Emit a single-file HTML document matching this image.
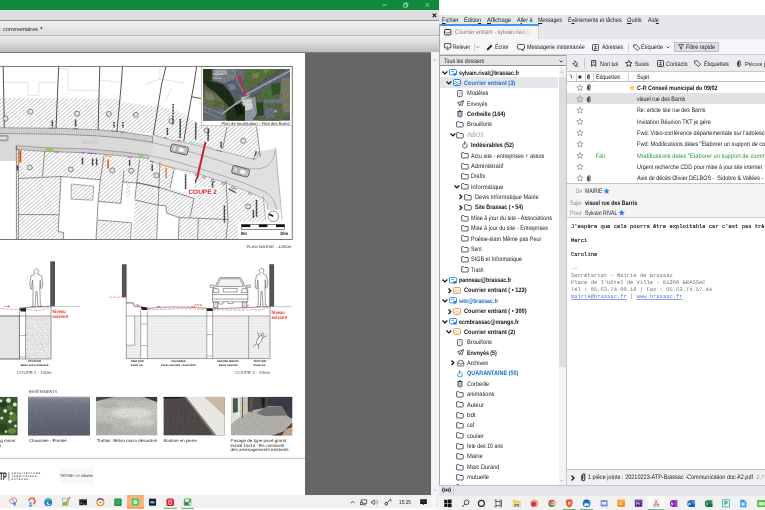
<!DOCTYPE html>
<html lang="fr"><head><meta charset="utf-8"><title>Bureau</title>
<style>
html,body{margin:0;padding:0}
body{width:765px;height:510px;overflow:hidden;position:relative;background:#fff;font-family:'Liberation Sans',sans-serif;text-rendering:geometricPrecision;-webkit-font-smoothing:antialiased}
.b{position:absolute;box-sizing:border-box}
.t{position:absolute;white-space:nowrap;display:block}
#leftwin,#rightwin{opacity:0.999}
#leftwin .t,#page{will-change:transform}
svg{position:absolute;overflow:visible}
</style></head><body>
<div class="b" id="leftwin" style="left:0;top:0;width:439.2px;height:510px;overflow:hidden"><div class="b" style="left:0px;top:0px;width:439.2px;height:10.4px;background:#10893e;"></div><svg style="left:370px;top:0" width="69" height="11" viewBox="0 0 69 11"><g stroke="#e8f5ec" stroke-width="0.6" fill="none"><path d="M12.2 5.1h4.6"/><path d="M33.6 3.9h3.3v3.3h-3.3z M34.5 3.9v-0.9h3.3v3.3h-0.9"/><path d="M55.5 2.9l3.9 3.9 M59.4 2.9l-3.9 3.9"/></g></svg><div class="b" style="left:0px;top:10.4px;width:439.2px;height:9.8px;background:#dedede;"></div><div class="b" style="left:0px;top:19.9px;width:439.2px;height:0.7px;background:#8f8f8f;"></div><svg style="left:431.6px;top:13.2px" width="5" height="5" viewBox="0 0 5 5"><path d="M0.7 0.7l3.4 3.4M4.1 0.7l-3.4 3.4" stroke="#111" stroke-width="1.1"/></svg><div class="b" style="left:0px;top:20.6px;width:439.2px;height:14.9px;background:linear-gradient(#f2f2f2,#ececec 30%,#dcdcdc);"></div><div class="b" style="left:0px;top:35.3px;width:439.2px;height:0.6px;background:#b9b9b9;"></div><span class="t" style="left:-1.5px;top:24.60px;height:10px;line-height:10px;font-size:5.6px;color:#2a62a8;">t</span><span class="t" style="left:2.6px;top:24.60px;height:10px;line-height:10px;font-size:5.6px;color:#222;">commentaires</span><svg style="left:40.3px;top:27px" width="3" height="3" viewBox="0 0 3 3"><path d="M0.2 0.6h2.4l-1.2 1.8z" fill="#222"/></svg><div class="b" style="left:0px;top:35.9px;width:439.2px;height:16.2px;background:linear-gradient(#ebebeb,#dadada 45%,#bdbdbd);"></div><div class="b" style="left:0px;top:51.5px;width:439.2px;height:1.1px;background:#7d7d7d;"></div><div class="b" style="left:0px;top:52.6px;width:431.4px;height:442.2px;background:#666666;"></div><div class="b" style="left:0px;top:52.6px;width:304.8px;height:442.2px;background:#ffffff;"></div><div class="b" style="left:431.4px;top:52.4px;width:7.8px;height:442.4px;background:#f3f3f3;"></div><svg style="left:431.4px;top:52.4px" width="8" height="443" viewBox="0 0 8 443"><g fill="none" stroke="#9a9a9a" stroke-width="0.6"><path d="M2.4 8.6l1.5-1.6 1.5 1.6"/><path d="M2.4 437.2l1.5 1.6 1.5-1.6"/></g></svg><svg id="page" style="left:0;top:0" width="305" height="495" viewBox="0 0 305 495" font-family="'Liberation Sans',sans-serif"><defs>
<pattern id="hatch" width="2.89" height="6" patternUnits="userSpaceOnUse" patternTransform="rotate(49)"><rect x="0" y="-1" width="0.7" height="8" fill="#b6b6b6"/></pattern>
<pattern id="hatchd" width="1.3" height="1.3" patternUnits="userSpaceOnUse"><rect width="1.3" height="1.3" fill="#7c7c7c"/><path d="M0 0L1.3 1.3M1.3 0L0 1.3" stroke="#262626" stroke-width="0.3"/></pattern>
<pattern id="pav" width="1.9" height="6" patternUnits="userSpaceOnUse"><rect width="1.9" height="6" fill="#dadada"/><path d="M0.3 0v6" stroke="#8e8e8e" stroke-width="0.4"/></pattern>
<pattern id="brick" width="3.4" height="2.6" patternUnits="userSpaceOnUse"><rect width="3.4" height="2.6" fill="#fdfdfd"/><path d="M0 0.2h3.4M0 1.5h3.4M0.8 0.2v1.3M2.5 1.5v1.3" stroke="#c4c4c4" stroke-width="0.32"/></pattern>
<pattern id="speck" width="5" height="5" patternUnits="userSpaceOnUse"><rect width="5" height="5" fill="#f6f6f6"/><g fill="#9c9c9c"><circle cx="0.6" cy="0.8" r="0.32"/><circle cx="2.2" cy="0.4" r="0.25"/><circle cx="3.9" cy="1.1" r="0.34"/><circle cx="1.4" cy="2.2" r="0.3"/><circle cx="3.1" cy="2.6" r="0.28"/><circle cx="4.6" cy="3.0" r="0.3"/><circle cx="0.5" cy="3.6" r="0.3"/><circle cx="2.3" cy="4.1" r="0.34"/><circle cx="3.8" cy="4.5" r="0.26"/><circle cx="1.3" cy="4.7" r="0.22"/></g></pattern>
<pattern id="diag" width="1.6" height="1.6" patternUnits="userSpaceOnUse"><rect width="1.6" height="1.6" fill="#eeeeee"/><path d="M-0.4 -0.4L2 2M-0.4 1.2L0.4 2M1.2 -0.4L2 0.4" stroke="#c6c6c6" stroke-width="0.35"/></pattern>
<clipPath id="mapclip"><rect x="-5" y="66.4" width="297.1" height="172.8"/></clipPath>
<linearGradient id="asph" x1="0" y1="0" x2="0" y2="1"><stop offset="0" stop-color="#8d90a0"/><stop offset="0.2" stop-color="#767a8a"/><stop offset="1" stop-color="#5d606c"/></linearGradient>
<linearGradient id="conc" x1="0" y1="0" x2="0" y2="1"><stop offset="0" stop-color="#a5a5a0"/><stop offset="0.12" stop-color="#c2c2bd"/><stop offset="0.45" stop-color="#cbcbc6"/><stop offset="1" stop-color="#b4b4af"/></linearGradient>
<filter id="grain" x="0" y="0" width="100%" height="100%"><feTurbulence type="fractalNoise" baseFrequency="1.1" numOctaves="2" seed="3" result="n"/><feColorMatrix in="n" type="matrix" values="0 0 0 0 0  0 0 0 0 0  0 0 0 0 0  0.9 0.9 0 0 -0.72" result="a"/><feComposite in="a" in2="SourceGraphic" operator="in"/></filter>
<filter id="blur05"><feGaussianBlur stdDeviation="0.45"/></filter>
<filter id="blur07" x="-10%" y="-10%" width="120%" height="120%"><feGaussianBlur stdDeviation="0.7"/></filter>
<filter id="blur1"><feGaussianBlur stdDeviation="0.8"/></filter>
<filter id="blur2"><feGaussianBlur stdDeviation="1.6"/></filter>
</defs><g clip-path="url(#mapclip)"><rect x="-5" y="66.4" width="297.1" height="172.8" fill="#fff"/><g fill="none" stroke="#c6c6c6" stroke-width="0.5"><path d="M4.3 82.3H28v13H38.8v-13H58"/><path d="M59.3 68.3l8.6 1.1v20.5l31.3 1"/><path d="M100.3 80.2l20.5 2.1"/><path d="M160 66.4v12M146 84l14-5 24 4M172 88l-7 14"/></g><path d="M-5 97.9L58 98.3 99 98.8 118.8 99.1 120.4 102 156.5 106.2 158 105.4 187.8 114.8 187.8 116.4 202 125.8 256.6 126.4 258.5 151.6 257.2 157.6 253.5 159.1 223.3 151.6 188.8 143.4 171.6 140.4 152.6 134.8 152.6 133.6 122.9 132 98.1 129.8 58.2 128.3 -5 127.7Z" fill="#fff"/><path d="M-5 97.9L58 98.3 99 98.8 118.8 99.1 120.4 102 156.5 106.2 158 105.4 187.8 114.8 187.8 116.4 202 125.8 256.6 126.4 258.5 151.6 257.2 157.6 253.5 159.1 223.3 151.6 188.8 143.4 171.6 140.4 152.6 134.8 152.6 133.6 122.9 132 98.1 129.8 58.2 128.3 -5 127.7Z" fill="url(#hatch)"/><path d="M-5 133.3L58.2 134.2 98.1 135.9 122.9 138 152.6 142.3 152.6 134.8 171.6 140.4 188.8 143.4 223.3 151.6 253.5 159.1 257.2 157.6 258.5 151.6 275.7 148.3 277.7 173.1 280 194.7 280.6 209.7 267.6 209.7 267 203.6 264.3 199 251.4 193 225.5 182.8 193.1 172 174.8 168.4 158.2 163.9 150 160.8 148.8 155.3 122.9 152 86.3 148.8 45.3 147.7 16.2 145.6 16.2 161-5 161Z" fill="#e0e0e0"/><path d="M-5 133.3L58.2 134.2 98.1 135.9 122.9 138 152.6 142.3 152.6 156 122.9 152 86.3 148.8 45.3 147.7 16.2 145.6 16.2 161-5 161Z" fill="#d9d9d9"/><path d="M-5 127.7L58.2 128.3 98.1 129.8 122.9 132 152.6 136.3 152.6 142.3 122.9 138 98.1 135.9 58.2 134.2 -5 133.3Z" fill="url(#pav)" stroke="#555" stroke-width="0.5"/><path d="M16.2 145.6L45.3 147.7 86.3 148.8 122.9 152 148.8 155.3 150 160.8 158.2 163.9 174.8 168.4 193.1 172 225.5 182.8 251.4 193 264.3 199 265.4 205 265.9 222 238.4 222 238.4 239.4 16.2 239.4Z" fill="#fff"/><path d="M16.2 145.6L45.3 147.7 86.3 148.8 122.9 152 148.8 155.3 150 160.8 158.2 163.9 174.8 168.4 193.1 172 225.5 182.8 251.4 193 264.3 199 265.4 205 265.9 222 238.4 222 238.4 239.4 16.2 239.4Z" fill="url(#hatch)"/><path d="M16.2 145.6L45.3 147.7 86.3 148.8 122.9 152 148.8 155.3 148.8 158.6 122.9 156 86.3 152.8 45.3 151.5 16.2 149.4Z" fill="url(#pav)" stroke="#555" stroke-width="0.45"/><rect x="45.3" y="147.9" width="8.6" height="3.2" fill="#8fcf5c"/><rect x="138" y="154.6" width="5.5" height="2" fill="#8fcf5c" transform="rotate(8 140 155)"/><path d="M61 176.5L100.3 179.7 98.1 201.3 96 239.4 63.6 239.4 63.6 232.5 58.2 231.5Z" fill="#fff"/><path d="M98.1 201.3L120.8 203.4 121.8 197 134.8 199.1 131.5 222.8 98.1 220Z" fill="#fff"/><path d="M122.9 181.9L127.2 181.9 126.2 197 121.8 197Z" fill="#fff"/><path d="M130 181.7L136.7 182.5 135 200 132.5 239.4 130 239.4Z" fill="#fff"/><path d="M157.5 205L165.8 205.8 166.7 213.3 179.2 217.5 178.3 239.4 156.7 239.4Z" fill="#fff"/><path d="M174.2 169.2L196.7 176.7 195 185 186.7 193.3 170 188.3Z" fill="#fff"/><path d="M-5 161H16.2V239.4H-5Z" fill="#fff"/><path d="M71.2 184L93.8 186.2 92.7 200.2 71.2 199.1Z" fill="url(#hatch)" stroke="#444" stroke-width="0.45"/><g fill="none" stroke="#262626" stroke-width="0.8"><path d="M3.2 66.4L4.3 127.6M58.7 66.4L56 128.3M99.8 66.4L98.1 129.8M122.5 66.4L121.2 85 116.9 132M166 66.4L161.5 85 153.3 135M196.6 66.4L193.8 85 184.7 135 183.8 141.6M191.8 96.8L200.8 98.4"/></g><g fill="none" stroke="#3a3a3a" stroke-width="0.55"><path d="M256.6 126.4L260.2 156.6M227 127l-4.5 22.5"/><path d="M16.4 146V239.4M18.4 149.5V239.4"/><path d="M18.4 178.5L61 176.5 100.3 179.7M18.4 214.5L58.5 214.7M44.6 151.7L42.5 176.9M61 176.5L58.2 231.5 63.6 232.5V239.4"/><path d="M100.3 179.7L104 156M100.3 179.7L98.1 201.3 96 239.4M98.1 201.3L120.8 203.4 124 170.5M98.1 220L131.5 222.8 130.5 239.4M134.8 199.1L139.5 160M122.9 181.9L139 183.2M139 183.2L160 188M156.7 239.4L160 162"/><path d="M136.7 182.5L157.5 186.8 194 198.5 190 217.5M179.2 217.5L228 219.5M198.5 218.3L197.5 239.4M135 200L157.5 205 165.8 205.8 166.7 213.3 179.2 217.5 178.3 239.4"/><path d="M174.2 169.2L170 188.3M228 219.5L226 180.5M226 239.4L228 219.5"/></g><g fill="none" stroke="#707070" stroke-width="0.45"><path d="M152.6 134.8L171.6 140.4 188.8 143.4 223.3 151.6 253.5 159.1"/><path d="M150 141.9L171.6 147.3 193.1 152.6 214.7 159.1 224.4 162.3C232 165 246 169.6 257.8 168.8S274 160 275.1 150.5"/><path d="M150 155.9L171.6 160.2 193.1 166.7 214.7 173.1 240.6 181.8 262.1 190.4C270 194 275 200 276.6 209.7"/><path d="M150 160.8L158.2 163.9 174.8 168.4 193.1 172 225.5 182.8 251.4 193 264.3 199 267 203.6 267.6 209.7"/><path d="M275.7 148.3L277.7 173.1 280 194.7 282 220.6M263.2 196L265.6 220.4"/></g><circle cx="30.2" cy="111.6" r="2.5" fill="#f2f2f2" stroke="#4e4e4e" stroke-width="0.7"/><circle cx="30.2" cy="111.6" r="0.95" fill="none" stroke="#a8a8a8" stroke-width="0.3"/><circle cx="77" cy="113.8" r="2.5" fill="#f2f2f2" stroke="#4e4e4e" stroke-width="0.7"/><circle cx="77" cy="113.8" r="0.95" fill="none" stroke="#a8a8a8" stroke-width="0.3"/><circle cx="108.9" cy="114" r="2.5" fill="#f2f2f2" stroke="#4e4e4e" stroke-width="0.7"/><circle cx="108.9" cy="114" r="0.95" fill="none" stroke="#a8a8a8" stroke-width="0.3"/><circle cx="135.8" cy="114.8" r="2.5" fill="#f2f2f2" stroke="#4e4e4e" stroke-width="0.7"/><circle cx="135.8" cy="114.8" r="0.95" fill="none" stroke="#a8a8a8" stroke-width="0.3"/><circle cx="29.8" cy="167.5" r="2.5" fill="#f2f2f2" stroke="#4e4e4e" stroke-width="0.7"/><circle cx="29.8" cy="167.5" r="0.95" fill="none" stroke="#a8a8a8" stroke-width="0.3"/><circle cx="70.8" cy="169.5" r="2.5" fill="#f2f2f2" stroke="#4e4e4e" stroke-width="0.7"/><circle cx="70.8" cy="169.5" r="0.95" fill="none" stroke="#a8a8a8" stroke-width="0.3"/><circle cx="112.3" cy="170.3" r="2.5" fill="#f2f2f2" stroke="#4e4e4e" stroke-width="0.7"/><circle cx="112.3" cy="170.3" r="0.95" fill="none" stroke="#a8a8a8" stroke-width="0.3"/><circle cx="131.2" cy="170.8" r="2.5" fill="#f2f2f2" stroke="#4e4e4e" stroke-width="0.7"/><circle cx="131.2" cy="170.8" r="0.95" fill="none" stroke="#a8a8a8" stroke-width="0.3"/><circle cx="5.5" cy="118.6" r="2.5" fill="#f2f2f2" stroke="#4e4e4e" stroke-width="0.7"/><circle cx="5.5" cy="118.6" r="0.95" fill="none" stroke="#a8a8a8" stroke-width="0.3"/><circle cx="171.4" cy="121.1" r="2.5" fill="#f2f2f2" stroke="#4e4e4e" stroke-width="0.7"/><circle cx="171.4" cy="121.1" r="0.95" fill="none" stroke="#a8a8a8" stroke-width="0.3"/><circle cx="243.2" cy="140.8" r="2.5" fill="#f2f2f2" stroke="#4e4e4e" stroke-width="0.7"/><circle cx="243.2" cy="140.8" r="0.95" fill="none" stroke="#a8a8a8" stroke-width="0.3"/><circle cx="248.1" cy="206.5" r="2.5" fill="#f2f2f2" stroke="#4e4e4e" stroke-width="0.7"/><circle cx="248.1" cy="206.5" r="0.95" fill="none" stroke="#a8a8a8" stroke-width="0.3"/><circle cx="156.5" cy="175.3" r="2.5" fill="#f2f2f2" stroke="#4e4e4e" stroke-width="0.7"/><circle cx="156.5" cy="175.3" r="0.95" fill="none" stroke="#a8a8a8" stroke-width="0.3"/><circle cx="206.7" cy="130.5" r="2.5" fill="#f2f2f2" stroke="#4e4e4e" stroke-width="0.7"/><circle cx="206.7" cy="130.5" r="0.95" fill="none" stroke="#a8a8a8" stroke-width="0.3"/><path d="M52.4 120.5V126.5" stroke="#111" stroke-width="1.5" stroke-dasharray="1.2 0.3" opacity="0.88"/><path d="M75.6 119.5V126.5" stroke="#111" stroke-width="1.5" stroke-dasharray="1.2 0.3" opacity="0.88"/><path d="M113.9 121.9V128.1" stroke="#111" stroke-width="1.5" stroke-dasharray="1.2 0.3" opacity="0.88"/><path d="M122.9 121.9V128.1" stroke="#111" stroke-width="1.5" stroke-dasharray="1.2 0.3" opacity="0.88"/><path d="M82.5 157.5V164.5" stroke="#111" stroke-width="1.5" stroke-dasharray="1.2 0.3" opacity="0.88"/><path d="M92.6 158.5V165.5" stroke="#111" stroke-width="1.5" stroke-dasharray="1.2 0.3" opacity="0.88"/><path d="M96.6 158.5V165.5" stroke="#111" stroke-width="1.5" stroke-dasharray="1.2 0.3" opacity="0.88"/><path d="M129.6 160.0V166.0" stroke="#111" stroke-width="1.5" stroke-dasharray="1.2 0.3" opacity="0.88"/><path d="M17.5 165.5V170.5" stroke="#111" stroke-width="1.5" stroke-dasharray="1.2 0.3" opacity="0.88"/><path d="M173 103.9V124.9" stroke="#111" stroke-width="1.5" stroke-dasharray="1.2 0.3" opacity="0.85" transform="rotate(1 173 114.4)"/><path d="M180.2 119.0V138.0" stroke="#111" stroke-width="1.5" stroke-dasharray="1.2 0.3" opacity="0.85" transform="rotate(1 180.2 128.5)"/><path d="M195.7 122.5V139.5" stroke="#111" stroke-width="1.5" stroke-dasharray="1.2 0.3" opacity="0.85" transform="rotate(1 195.7 131)"/><path d="M208.2 129.0V141.0" stroke="#111" stroke-width="1.5" stroke-dasharray="1.2 0.3" opacity="0.85" transform="rotate(1 208.2 135)"/><path d="M167.4 128.0V135.0" stroke="#111" stroke-width="1.5" stroke-dasharray="1.2 0.3" opacity="0.85" transform="rotate(0 167.4 131.5)"/><path d="M221.2 141.85V148.35" stroke="#111" stroke-width="1.5" stroke-dasharray="1.2 0.3" opacity="0.85" transform="rotate(0 221.2 145.1)"/><path d="M255.5 151.2V157.2" stroke="#111" stroke-width="1.5" stroke-dasharray="1.2 0.3" opacity="0.85" transform="rotate(15 255.5 154.2)"/><path d="M152.2 164.55V171.05" stroke="#111" stroke-width="1.5" stroke-dasharray="1.2 0.3" opacity="0.85" transform="rotate(0 152.2 167.8)"/><path d="M185.6 174.3V189.3" stroke="#111" stroke-width="1.5" stroke-dasharray="1.2 0.3" opacity="0.85" transform="rotate(0 185.6 181.8)"/><path d="M212.5 179.6V188.20000000000002" stroke="#111" stroke-width="1.5" stroke-dasharray="1.2 0.3" opacity="0.85" transform="rotate(0 212.5 183.9)"/><path d="M232.5 186.9V194.9" stroke="#111" stroke-width="1.5" stroke-dasharray="1.2 0.3" opacity="0.85" transform="rotate(-62 232.5 190.9)"/><path d="M224.4 205.6V222.6" stroke="#111" stroke-width="1.5" stroke-dasharray="1.2 0.3" opacity="0.85" transform="rotate(0 224.4 214.1)"/><path d="M256.5 200.0V217.0" stroke="#111" stroke-width="1.5" stroke-dasharray="1.2 0.3" opacity="0.85" transform="rotate(0 256.5 208.5)"/><path d="M253.4 210.0V218.0" stroke="#111" stroke-width="1.5" stroke-dasharray="1.2 0.3" opacity="0.85" transform="rotate(0 253.4 214)"/><rect x="49.5" y="127.6" width="5" height="0.9" fill="#a04fc0" transform="rotate(0 49.5 127.6)"/><rect x="73" y="127.9" width="5" height="0.9" fill="#a04fc0" transform="rotate(1 73 127.9)"/><rect x="111.5" y="130.4" width="4" height="0.9" fill="#a04fc0" transform="rotate(4 111.5 130.4)"/><rect x="120.5" y="131.4" width="4" height="0.9" fill="#a04fc0" transform="rotate(5 120.5 131.4)"/><rect x="55" y="151.6" width="4" height="0.9" fill="#a04fc0" transform="rotate(1 55 151.6)"/><rect x="81" y="152.4" width="4" height="0.9" fill="#a04fc0" transform="rotate(3 81 152.4)"/><rect x="87.5" y="152.8" width="9" height="0.9" fill="#a04fc0" transform="rotate(4 87.5 152.8)"/><rect x="128" y="157.2" width="4" height="0.9" fill="#a04fc0" transform="rotate(7 128 157.2)"/><rect x="150.2" y="160.6" width="4" height="0.9" fill="#a04fc0" transform="rotate(18 150.2 160.6)"/><rect x="163.6" y="136.9" width="3.6" height="0.9" fill="#a04fc0" transform="rotate(14 163.6 136.9)"/><rect x="177" y="139.7" width="4.4" height="0.9" fill="#a04fc0" transform="rotate(14 177 139.7)"/><rect x="216.8" y="149.8" width="5.6" height="0.9" fill="#a04fc0" transform="rotate(15 216.8 149.8)"/><rect x="252.6" y="159.1" width="6.4" height="0.9" fill="#a04fc0" transform="rotate(-52 252.6 159.1)"/><rect x="211.3" y="180.2" width="4.4" height="0.9" fill="#a04fc0" transform="rotate(18 211.3 180.2)"/><rect x="231.6" y="187" width="5.4" height="0.9" fill="#a04fc0" transform="rotate(20 231.6 187)"/><path d="M188.4 141.9L205 145.1M207.1 146.2L212.5 147.7" stroke="#9fe0ea" stroke-width="1.1"/><rect x="19" y="150" width="2.6" height="13" fill="#f59a23"/><rect x="19.7" y="151" width="1.2" height="10" fill="#e8402a"/><path d="M104.8 155.6l6.6 0.8" stroke="#f59a23" stroke-width="1"/><rect x="107.4" y="159.5" width="1.4" height="9" fill="#e8402a"/><path d="M158.2 163.9L174.8 168.4" stroke="#f59a23" stroke-width="0.9"/><rect x="165.4" y="167.8" width="1.5" height="10.6" fill="#f0683a" opacity="0.85"/><text x="83" y="144.2" font-size="5.2" fill="#c3c3c3" font-weight="bold">Barris</text><rect x="-3" y="135.4" width="11" height="5.4" rx="1" fill="#c4c4c4" stroke="#666" stroke-width="0.5"/><rect x="-2" y="136.6" width="8.6" height="3" fill="#e2e2e2" stroke="#777" stroke-width="0.35"/><g transform="translate(179.4 149.4) rotate(13)" fill="none" stroke="#505050"><rect x="-8.6" y="-4" width="17.2" height="8" rx="2.4" fill="#e6e6e6" stroke-width="0.95"/><rect x="-6.8" y="-2.9" width="13.6" height="5.8" rx="1.7" fill="#dcdcdc" stroke="#6a6a6a" stroke-width="0.5"/><rect x="-3.8" y="-2.6" width="2.6" height="5.2" fill="#b4b4b4" stroke="none"/><rect x="-0.8" y="-2.3" width="5.6" height="4.6" rx="0.9" fill="#f4f4f4" stroke="#8a8a8a" stroke-width="0.35"/></g><g transform="translate(240.6 171.3) rotate(16)" fill="none" stroke="#505050"><rect x="-8.6" y="-4" width="17.2" height="8" rx="2.4" fill="#e6e6e6" stroke-width="0.95"/><rect x="-6.8" y="-2.9" width="13.6" height="5.8" rx="1.7" fill="#dcdcdc" stroke="#6a6a6a" stroke-width="0.5"/><rect x="-3.8" y="-2.6" width="2.6" height="5.2" fill="#b4b4b4" stroke="none"/><rect x="-0.8" y="-2.3" width="5.6" height="4.6" rx="0.9" fill="#f4f4f4" stroke="#8a8a8a" stroke-width="0.35"/></g><rect x="195.0" y="173.79999999999998" width="2.8" height="1.8" fill="#ececec" stroke="#555" stroke-width="0.4" transform="rotate(18 196.4 174.7)"/><rect x="202.6" y="176.29999999999998" width="2.8" height="1.8" fill="#ececec" stroke="#555" stroke-width="0.4" transform="rotate(18 204 177.2)"/><rect x="211.1" y="179.7" width="2.8" height="1.8" fill="#ececec" stroke="#555" stroke-width="0.4" transform="rotate(18 212.5 180.6)"/><rect x="221.9" y="182.7" width="2.8" height="1.8" fill="#ececec" stroke="#555" stroke-width="0.4" transform="rotate(20 223.3 183.6)"/><rect x="231.6" y="186.7" width="2.8" height="1.8" fill="#ececec" stroke="#555" stroke-width="0.4" transform="rotate(22 233 187.6)"/><rect x="248.4" y="192.5" width="2.8" height="1.8" fill="#ececec" stroke="#555" stroke-width="0.4" transform="rotate(22 249.8 193.4)"/><path d="M253.5 159.1c2.6 0.2 4.8-2.2 5-7.5" fill="#f0f0f0" stroke="#555" stroke-width="0.5"/><path d="M205.5 142L197 178.4" stroke="#cf1f2e" stroke-width="2" stroke-linecap="butt"/><path d="M196.9 178.6l-1.7 4.8 0.5-4.6z" fill="#222" stroke="#222" stroke-width="0.4"/><rect x="187" y="187.6" width="31" height="7.6" fill="#fff"/><text x="188.4" y="193.8" font-size="6.6" font-weight="bold" fill="#d6212e" textLength="28.6" lengthAdjust="spacingAndGlyphs">COUPE 2</text><rect x="238.4" y="221.8" width="53.8" height="17.8" fill="#fff"/><rect x="241.7" y="224.5" width="42.8" height="5" fill="#fff" stroke="#111" stroke-width="0.5"/><rect x="241.70" y="224.5" width="8.56" height="2.6" fill="#111"/><rect x="258.82" y="224.5" width="8.56" height="2.6" fill="#111"/><rect x="275.94" y="224.5" width="8.56" height="2.6" fill="#111"/><text x="240.7" y="235.3" font-size="4.6" font-weight="bold" fill="#111" textLength="6.2" lengthAdjust="spacingAndGlyphs">0m</text><text x="279.9" y="235.3" font-size="4.6" font-weight="bold" fill="#111" textLength="8.2" lengthAdjust="spacingAndGlyphs">10m</text><circle cx="273.3" cy="216.3" r="5.3" fill="#fff" stroke="#333" stroke-width="0.5"/><path d="M268.9 214.2l4.4 2" stroke="#1a1a1a" stroke-width="1.7"/><rect x="201.3" y="66.4" width="91" height="59.4" fill="#fff" stroke="#888" stroke-width="0.5"/><clipPath id="aerclip"><rect x="203" y="69" width="87" height="51.8"/></clipPath><g clip-path="url(#aerclip)"><rect x="203" y="69" width="87" height="51.8" fill="#56604c"/><g filter="url(#blur07)"><polygon points="202.1,68.1 213.1,68.1 212.0,80.2 207.6,81.3 202.1,83.5" fill="#26381f" opacity="1"/><polygon points="212.0,68.1 234.0,68.1 235.1,79.1 225.2,83.5 213.1,80.2" fill="#7f858a" opacity="1"/><polygon points="214.2,70.3 226.3,69.7 227.4,74.7 215.3,75.8" fill="#a9adb0" opacity="1"/><polygon points="234.0,68.1 249.4,68.1 249.4,79.1 237.3,80.2" fill="#6d737e" opacity="1"/><polygon points="202.1,89.0 215.3,92.8 223.0,100.0 224.1,107.7 214.2,108.8 202.1,106.6" fill="#6d7452" opacity="1"/><polygon points="205.4,92.3 213.1,94.5 214.2,100.0 206.5,100.0" fill="#8a8a68" opacity="1"/><polygon points="214.2,98.9 221.9,102.2 220.8,107.7 213.1,106.6" fill="#587040" opacity="1"/><polygon points="202.1,106.6 224.1,108.8 224.6,121.9 202.1,121.9" fill="#6a707c" opacity="1"/><polygon points="225.2,82.4 237.3,79.1 249.4,81.3 249.4,95.6 237.3,100.0 230.7,93.4" fill="#5c6574" opacity="1"/><polygon points="227.4,84.6 234.0,83.5 236.2,89.0 229.6,90.6" fill="#7e8794" opacity="1"/><polygon points="203.7,82.4 208.7,80.4 223.0,84.4 229.8,92.1 234.2,100.0 235.3,105.7 228.5,106.8 222.8,100.0 215.3,92.5 207.6,87.0" fill="#1f2f1f" opacity="1"/><polygon points="226.3,109.9 237.3,104.4 247.2,105.5 249.4,121.9 226.3,121.9" fill="#27361f" opacity="1"/><polygon points="234.0,106.6 240.6,103.3 245.0,113.2 237.3,116.5" fill="#161f14" opacity="1"/><polygon points="241.1,97.2 249.9,96.1 249.9,106.6 243.3,105.7" fill="#dcdcdc" opacity="1"/><polygon points="245.0,68.1 281.3,68.1 251.6,87.9 245.0,90.6" fill="#58763f" opacity="1"/><polygon points="251.6,73.6 259.3,72.5 258.2,78.0 252.7,79.1" fill="#7f8a5c" opacity="1"/><polygon points="261.5,69.2 270.3,69.2 265.9,74.7" fill="#6f8a4d" opacity="1"/><polygon points="281.3,68.1 291.2,68.1 291.2,73.6" fill="#5d6a72" opacity="1"/><polygon points="245.0,91.7 290.6,67.5 291.2,75.2 247.2,98.3" fill="#5f6a7e" opacity="1"/><polygon points="258.2,94.5 291.2,75.8 291.2,113.2 278.0,121.9 259.3,121.9 256.0,103.3" fill="#5d6e4c" opacity="1"/><polygon points="270.8,83.5 280.2,83.5 281.8,93.4 272.5,95.6" fill="#2f5a2a" opacity="1"/><polygon points="261.5,90.1 270.8,87.9 272.5,98.9 263.7,100.0" fill="#4f7a3c" opacity="1"/><polygon points="255.4,102.2 263.1,102.2 263.7,115.4 256.5,115.4" fill="#2c4a26" opacity="1"/><polygon points="281.3,78.0 291.2,76.9 291.2,111.0 283.5,113.2 280.2,94.5" fill="#80806a" opacity="1"/><polygon points="264.8,108.8 274.1,107.7 274.7,117.5 265.3,118.6" fill="#6c7486" opacity="1"/><polygon points="245.0,98.3 255.4,96.7 257.1,113.2 251.6,121.9 245.0,121.9" fill="#9aa0aa" opacity="1"/><polygon points="245.0,100.0 251.6,98.9 252.7,108.8 245.0,111.0" fill="#e2e2e2" opacity="1"/><polygon points="263.7,100.0 281.3,98.9 281.8,102.7 263.7,103.8" fill="#737a86" opacity="1"/><polygon points="273.8,110.1 276.9,110.1 276.9,112.3 273.8,112.3" fill="#8fc4cf" opacity="1"/></g><polyline points="222.4,113.7 236.2,103.3 249.4,95.0" stroke="#b4b8be" stroke-width="1.5" fill="none" filter="url(#blur05)"/><polyline points="245.0,95.0 290.6,70.5" stroke="#a9aeb8" stroke-width="1.5" fill="none" filter="url(#blur05)"/><polyline points="234.0,69.2 237.3,81.3 245.0,94.5" stroke="#8d929c" stroke-width="1.2" fill="none" filter="url(#blur05)"/><polyline points="203.0,106.6 223.0,114.3" stroke="#9399a4" stroke-width="1" fill="none" filter="url(#blur05)"/><polyline points="203.0,111.0 220.8,118.6" stroke="#8a909a" stroke-width="1" fill="none" filter="url(#blur05)"/><rect x="203" y="69" width="87" height="51.8" fill="#141c12" filter="url(#grain)" opacity="0.4"/><text x="212.4" y="75.2" font-size="2.7" fill="#f2f2f2" opacity="0.75">Place du</text><text x="211.6" y="78.8" font-size="2.7" fill="#f2f2f2" opacity="0.75">Carreau</text><polyline points="238.9,78.0 245.0,92.8" stroke="#dc1e2c" stroke-width="1.1" fill="none"/><polygon points="237.0,78.9 239.5,75.6 241.9,78.0" fill="#dc1e2c" opacity="1"/><polygon points="243.0,92.5 246.9,91.4 245.8,95.4" fill="#dc1e2c" opacity="1"/></g><text x="221.6" y="124.6" font-size="4.3" fill="#222" textLength="68" lengthAdjust="spacingAndGlyphs">Plan de localisation – Rue des Barris</text></g><rect x="-5" y="66.3" width="297.2" height="173.1" fill="none" stroke="#3c3c3c" stroke-width="0.7"/><text x="246.4" y="248.3" font-size="3.7" fill="#2a2a2a" textLength="45" lengthAdjust="spacingAndGlyphs">PLAN MASSE - 1/250e</text><rect x="50.2" y="261.3" width="4.8" height="45" fill="url(#hatchd)"/><path d="M35.08 272.95C33.40 272.76 33.40 269.00 36.48 269.00C39.28 269.00 39.28 272.76 37.60 272.95L37.88 274.26L41.52 275.77L42.92 284.04L41.80 288.55L40.40 287.80L40.96 284.04L40.12 280.28L39.84 288.55L40.40 305.10L42.08 306.60L37.88 306.60L37.04 291.56L35.92 291.56L35.08 306.60L31.44 306.60L32.84 305.10L33.12 288.55L32.56 280.28L31.72 284.79L32.00 289.30L30.32 288.55L29.76 283.29L31.16 275.77L34.80 274.26Z" fill="#fff" stroke="#3c3c3c" stroke-width="0.5" stroke-linejoin="round"/><rect x="-2" y="316" width="21.4" height="43" fill="url(#diag)" stroke="#555" stroke-width="0.4"/><rect x="25.6" y="316" width="25.5" height="43" fill="url(#speck)"/><rect x="25.6" y="316" width="25.5" height="43" fill="#8a8a8a" filter="url(#grain)" opacity="0.22"/><g fill="none" stroke="#444" stroke-width="0.5"><path d="M-2 316H51.1M19.4 309V359M25.6 311V359M51.1 306.3V359M-2 359H51.1"/><path d="M19.4 335.6h6.2M19.4 357h6.2" stroke-width="0.4"/></g><path d="M19.4 308.6l6.6-0.6v3.4h-5z" fill="#222"/><path d="M19 308.4L25.6 307.4 50.6 306.3" stroke="#222" stroke-width="0.55" fill="none"/><path d="M51 306.3H80.2" stroke="#8a8a8a" stroke-width="0.5"/><path d="M4 306.4h5.5M7.8 305.8l2 0.6-2 0.6" stroke="#444" stroke-width="0.4" fill="none"/><path d="M-2 308.4L12 309.2 19.4 310M26 309.6L40 310.4 45 308.6 51 307.6" stroke="#f0624a" stroke-width="0.6" stroke-dasharray="3 1.1" fill="none"/><text x="52.4" y="312.9" font-size="4.7" font-weight="bold" fill="#e8402a" textLength="13.4" lengthAdjust="spacingAndGlyphs">Niveau</text><text x="52.4" y="317.9" font-size="4.7" font-weight="bold" fill="#e8402a" textLength="15.8" lengthAdjust="spacingAndGlyphs">existant</text><text x="34.6" y="362.4" font-size="2.6" font-weight="bold" fill="#111" text-anchor="middle">TROTTOIR</text><text x="34.6" y="366.3" font-size="2.6" font-weight="bold" fill="#111" text-anchor="middle">Béton micro désactivé</text><text x="16.8" y="373.8" font-size="4.3" fill="#555" textLength="35" lengthAdjust="spacingAndGlyphs">COUPE 2 - 1/50e</text><rect x="121.9" y="264.2" width="4.7" height="33.2" fill="url(#hatchd)"/><rect x="269.3" y="264.2" width="4.8" height="42.4" fill="url(#hatchd)"/><path d="M108.9 297.2H126" stroke="#f0624a" stroke-width="0.6" stroke-dasharray="3 1.1"/><rect x="126.3" y="316" width="143.7" height="42.6" fill="url(#brick)"/><rect x="126.3" y="316" width="8.4" height="29.2" fill="#fff"/><rect x="140.7" y="311" width="6.6" height="47.6" fill="#fff"/><rect x="206.8" y="311" width="5.8" height="47.6" fill="#fff"/><g fill="none" stroke="#444" stroke-width="0.5"><path d="M126.3 297.4V358.6H270V306.6"/><path d="M126.3 316H270" stroke="#666"/><path d="M134.7 316V345.2H126.3M140.7 309.6V358.6M147.3 311V358.6M206.8 310.6V358.6M212.6 309.6V358.6M248.6 316V358.6" stroke-width="0.42"/><path d="M140.7 324h6.6M140.7 345.6h6.6M206.8 334.6h5.8M206.8 356h5.8" stroke-width="0.4"/></g><path d="M126.3 303H133.2L134.6 306.2H140.6" stroke="#222" stroke-width="0.55" fill="none"/><path d="M140.6 306.4l6.8 1.2v2.4h-5.4z" fill="#222"/><path d="M206.6 308.2h6v2.8h-6z" fill="#222"/><path d="M147.4 308.4C165 306.4 185 306.6 206.6 308.2M212.6 308.6C230 308.4 250 307.4 270 306.6" stroke="#333" stroke-width="0.5" fill="none"/><path d="M270 306.7H292" stroke="#8a8a8a" stroke-width="0.5"/><path d="M126.6 302.6L133 303 134.6 306.6 141 307.4M147.6 309.8L180 308.6 206 309.4M213 309.8L240 310 262 309.8 270 306.8" stroke="#f0624a" stroke-width="0.6" stroke-dasharray="3 1.1" fill="none"/><path d="M136 304.6l3.6 0.8M157 306.6l3.4-0.2M191 306.6l4 0.2M245.4 305.6l4-0.2" stroke="#b04fc8" stroke-width="0.7"/><text x="194.4" y="306.2" font-size="3" font-weight="bold" fill="#e8402a">2.5 %</text><g fill="#fff" stroke="#3c3c3c" stroke-width="0.5" stroke-linejoin="round"><path d="M213.4 307.6v-5.8h4.4v5.8zM242.4 307.6v-5.8h4.4v5.8z" fill="#ddd"/><path d="M212.6 301.8V289.6L215 286.8 219.6 277.6H240.8L245.4 286.8 247.8 289.6V301.8Z"/><path d="M216.6 286.4L220.6 278.8H239.8L243.8 286.4Z" fill="#f4f4f4"/><path d="M210.2 285.2h3.6v2.2h-3.6zM246.6 285.2h3.6v2.2h-3.6z"/><path d="M212.6 294.6H247.8M212.6 299H247.8M223.2 288.4h14v3.6h-14zM213.4 288.6h4.6l1 4h-5.6zM242.4 288.6h4.6v4h-5.6zM218.6 301.8v2.2h4.4v-2.2M228 301.8v1.6h5v-1.6"/></g><path d="M260.31 272.41C258.68 272.22 258.68 268.40 261.67 268.40C264.39 268.40 264.39 272.22 262.76 272.41L263.03 273.75L266.57 275.28L267.93 283.68L266.84 288.26L265.48 287.50L266.02 283.68L265.21 279.86L264.94 288.26L265.48 305.07L267.11 306.60L263.03 306.60L262.22 291.32L261.13 291.32L260.31 306.60L256.78 306.60L258.14 305.07L258.41 288.26L257.86 279.86L257.05 284.44L257.32 289.03L255.69 288.26L255.14 282.92L256.50 275.28L260.04 273.75Z" fill="#fff" stroke="#3c3c3c" stroke-width="0.5" stroke-linejoin="round"/><text x="271.4" y="314" font-size="4.7" font-weight="bold" fill="#e8402a" textLength="13.4" lengthAdjust="spacingAndGlyphs">Niveau</text><text x="271.4" y="319.1" font-size="4.7" font-weight="bold" fill="#e8402a" textLength="15.8" lengthAdjust="spacingAndGlyphs">existant</text><g transform="translate(259.4 340) rotate(25)" fill="#fff" stroke="#444" stroke-width="0.5"><ellipse cx="0" cy="0" rx="2" ry="5"/><circle cx="0.4" cy="-6.4" r="1.4"/><path d="M-1.6 -3l-3.6-3.6M1.8 -3l3-4M-1 4.6l-2 4M1.2 4.6l1.6 3.6"/></g><text x="137" y="362.2" font-size="2.6" font-weight="bold" fill="#111" text-anchor="middle">TROTTOIR</text><text x="137" y="366.1" font-size="2.6" font-weight="bold" fill="#111" text-anchor="middle">Pavés cal.</text><text x="178.5" y="362.2" font-size="2.6" font-weight="bold" fill="#111" text-anchor="middle">CHAUSSEE</text><text x="178.5" y="366.1" font-size="2.6" font-weight="bold" fill="#111" text-anchor="middle">Pavés naturelle - Pavé 10/10</text><text x="228.2" y="362.2" font-size="2.6" font-weight="bold" fill="#111" text-anchor="middle">DEPOSE MINUTE</text><text x="228.2" y="366.1" font-size="2.6" font-weight="bold" fill="#111" text-anchor="middle">Pavés naturelle</text><text x="259.8" y="362.2" font-size="2.6" font-weight="bold" fill="#111" text-anchor="middle">TROTTOIR</text><text x="259.8" y="366.1" font-size="2.6" font-weight="bold" fill="#111" text-anchor="middle">Pavés cal.</text><text x="235" y="373.8" font-size="4.3" fill="#555" textLength="35" lengthAdjust="spacingAndGlyphs">COUPE 3 - 1/50e</text><text x="28.7" y="392.7" font-size="4" fill="#2a2a2a" textLength="28.4" lengthAdjust="spacingAndGlyphs">REVÊTEMENTS</text><clipPath id="ph1"><rect x="-2" y="396.8" width="19.7" height="38.8"/></clipPath><g clip-path="url(#ph1)"><rect x="-2" y="396.8" width="19.7" height="38.8" fill="#3c5a2a"/><g filter="url(#blur05)"><ellipse cx="3" cy="404" rx="4" ry="3" fill="#22401a"/><ellipse cx="13" cy="417" rx="4" ry="5" fill="#58853a"/><ellipse cx="3" cy="428" rx="5" ry="4" fill="#2a4a20"/><ellipse cx="12" cy="431" rx="4" ry="3" fill="#64904a"/><ellipse cx="10" cy="408" rx="3" ry="2.4" fill="#55803a"/><circle cx="8.6" cy="400.4" r="2.3" fill="#f4f6ee"/><circle cx="14.8" cy="404.6" r="2" fill="#eef2e6"/><circle cx="5.2" cy="410.8" r="1.9" fill="#f6f8f0"/><circle cx="11.2" cy="413.2" r="1.5" fill="#e8eede"/><circle cx="10" cy="421.6" r="1.8" fill="#eef2e4"/><circle cx="1.8" cy="418" r="1.6" fill="#e6ecdc"/><circle cx="15.4" cy="426" r="1.5" fill="#e2ead6"/><circle cx="6" cy="431.6" r="1.3" fill="#dfe8d2"/><circle cx="1" cy="401" r="1.4" fill="#e6ecdc"/></g><rect x="-2" y="396.8" width="19.7" height="38.8" fill="#16300f" filter="url(#grain)" opacity="0.3"/></g><rect x="28" y="396.8" width="62" height="38.8" fill="url(#asph)"/><rect x="28" y="396.8" width="62" height="38.8" fill="#2c2e38" filter="url(#grain)" opacity="0.22"/><rect x="28" y="396.8" width="62" height="1.4" fill="#9a9ca8" opacity="0.8"/><clipPath id="ph3"><rect x="96" y="396.8" width="61.4" height="38.8"/></clipPath><g clip-path="url(#ph3)"><rect x="96" y="396.8" width="61.4" height="38.8" fill="url(#conc)"/><g filter="url(#blur2)"><ellipse cx="132" cy="413" rx="20" ry="5" fill="#e4e3de" opacity="0.95"/><ellipse cx="142" cy="422" rx="13" ry="4" fill="#d9d8d2" opacity="0.8"/><ellipse cx="104" cy="428" rx="9" ry="6" fill="#aaa9a4" opacity="0.7"/><ellipse cx="108" cy="405" rx="10" ry="3" fill="#b0afa9" opacity="0.7"/></g><path d="M96 396.8H115L96 401.2Z" fill="#4a4f46"/><path d="M143 396.8H157.4V402.2Z" fill="#3c3e3a"/><rect x="96" y="396.8" width="61.4" height="38.8" fill="#5a5a56" filter="url(#grain)" opacity="0.2"/></g><clipPath id="ph4"><rect x="163.4" y="396.8" width="61.4" height="38.8"/></clipPath><g clip-path="url(#ph4)"><rect x="163.4" y="396.8" width="61.4" height="38.8" fill="#554d4e"/><rect x="163.4" y="396.8" width="61.4" height="38.8" fill="#1e1b1c" filter="url(#grain)" opacity="0.35"/><path d="M204.8 396.8H224.8V415.6Z" fill="#c9b9a8"/><path d="M185.9 396.8H204.8L224.8 415.6V435.6H216.5Z" fill="#e8e7e0"/><path d="M213.8 435.6L216.5 435.6L185.9 396.8H184.4Z" fill="#9a968f" opacity="0.7"/><path d="M163.4 396.8H186L178 398.40000000000003H163.4Z" fill="#1f1d1f"/></g><clipPath id="ph5"><rect x="230.8" y="396.8" width="61.5" height="38.8"/></clipPath><g clip-path="url(#ph5)"><rect x="230.8" y="396.8" width="61.5" height="38.8" fill="#b4b3ae"/><g filter="url(#blur05)"><path d="M247.6 396.7L292.8 396.7L292.8 406.1L268.3 406.1L264.5 408.0L253.2 409.9L247.6 412.2Z" fill="#4a4644"/><path d="M268.3 396.7L292.8 396.7L292.8 419.3L287.1 415.5L281.5 406.1L268.3 406.1Z" fill="#3a3e4a"/><path d="M256.1 413.2L265.5 407.1L281.5 406.1L287.6 415.5L264.5 416.0Z" fill="#77777a"/><path d="M229.7 396.7L240.5 396.7L240.5 416.7L229.7 425.1Z" fill="#e9e9e4"/><path d="M232.9 398.2L237.8 398.2L237.8 412.0L232.9 412.9Z" fill="#3f5f55"/><path d="M240.5 396.7L247.6 396.7L247.6 413.2L240.5 416.7Z" fill="#cfcfc8"/><path d="M242.0 397.6L242.9 397.6L242.9 417.4L242.0 417.9Z" fill="#55555a"/><path d="M243.6 403.3L245.1 403.3L245.1 410.8L243.6 411.3Z" fill="#d8c85a"/><path d="M261.2 397.8L265.0 397.8L264.5 407.5L261.9 407.5Z" fill="#1e1e22"/><path d="M249.7 397.6L252.9 397.6L252.5 412.2L250.2 412.2Z" fill="#5a5a5c"/><path d="M292.0 423.1L292.8 420.2L292.8 436.2L270.2 436.2L283.4 431.5Z" fill="#4a4442"/><path d="M285.2 429.6L292.8 426.8L292.8 436.2L281.5 436.2Z" fill="#c8a88e"/><path d="M229.7 425.1L240.5 416.7L247.6 413.2L256.1 413.2L264.5 416.0L287.1 415.5L290.9 419.3L292.0 423.1L283.4 431.5L270.2 435.8L229.7 436.2Z" fill="#b9b8b2" opacity="0.0"/></g><rect x="230.8" y="396.8" width="61.5" height="38.8" fill="#3c3c3a" filter="url(#grain)" opacity="0.18"/></g><text x="-2.4" y="442.2" font-size="4.3" fill="#1e1e1e" textLength="18" lengthAdjust="spacingAndGlyphs">ng minor</text><text x="-0.6" y="446.6" font-size="4.3" fill="#1e1e1e" textLength="1.6" lengthAdjust="spacingAndGlyphs">s</text><text x="28.9" y="442.2" font-size="4.3" fill="#1e1e1e" textLength="37.7" lengthAdjust="spacingAndGlyphs">Chaussée  - Enrobé</text><text x="96.8" y="442.2" font-size="4.3" fill="#1e1e1e" textLength="60.2" lengthAdjust="spacingAndGlyphs">Trottoir -Béton micro désactivé</text><text x="163.4" y="442.2" font-size="4.3" fill="#1e1e1e" textLength="33.6" lengthAdjust="spacingAndGlyphs">Bordure en pierre</text><text x="230.6" y="442.2" font-size="4.3" fill="#1e1e1e" textLength="55.5" lengthAdjust="spacingAndGlyphs">Pavage de type pavé granit</text><text x="230.6" y="446.5" font-size="4.3" fill="#1e1e1e" textLength="53.5" lengthAdjust="spacingAndGlyphs">éclaté 10x10 - En continuité</text><text x="230.6" y="450.8" font-size="4.3" fill="#1e1e1e" textLength="57.9" lengthAdjust="spacingAndGlyphs">des aménagements existants</text><path d="M-2 458.3H305" stroke="#a4a4a4" stroke-width="0.7"/><text x="-0.5" y="480.1" font-size="10.8" font-weight="bold" fill="#111" textLength="7.1" lengthAdjust="spacingAndGlyphs">TP</text><path d="M8.9 472.2v8.5" stroke="#222" stroke-width="0.55"/><text x="11.6" y="474.3" font-size="2.3" font-weight="bold" fill="#2a2a2a" letter-spacing="0.95">ARCHITECTURE</text><text x="11.6" y="477.0" font-size="2.3" font-weight="bold" fill="#2a2a2a" letter-spacing="0.95">TERRITOIRES</text><text x="11.6" y="479.7" font-size="2.3" font-weight="bold" fill="#2a2a2a" letter-spacing="0.95">PAYSAGE</text><rect x="59" y="467.6" width="34.8" height="15.9" fill="#f7f7f7"/><text x="60.1" y="476.7" font-size="4.2" fill="#3a3a3a" textLength="32.6" lengthAdjust="spacingAndGlyphs">TECHNI-<tspan fill="#d98a1e">ci</tspan><tspan fill="#5aa63a">té</tspan> urbaine</text></svg><div class="b" style="left:0px;top:494.8px;width:439.2px;height:13.6px;background:#f1f1f1;"></div><div class="b" style="left:0px;top:508.4px;width:439.2px;height:1.6px;background:#fdfdfd;"></div><svg style="left:0;top:494.8px" width="440" height="15.2" viewBox="0 494.8 440 15.2" font-family="'Liberation Sans',sans-serif"><rect x="126.9" y="494.8" width="16.9" height="13.5" fill="#fab07c"/><rect x="126.9" y="507.4" width="16.9" height="0.9" fill="#ee7f35"/><ellipse cx="13" cy="500.6" rx="3.6" ry="2.7" fill="#fdf3f3" stroke="#e8707a" stroke-width="0.9" transform="rotate(-15 13 500.6)"/><path d="M13.6 500.4l2.6 3.6-1.2 0.2 0.5 1.6-1 0.3-0.5-1.6-1 0.7z" fill="#3b8fe0"/><circle cx="12.4" cy="500" r="0.9" fill="#9aa"/><path d="M28.9 500.9a3 3 0 1 1 4.2 3" fill="none" stroke="#e4603e" stroke-width="1.5"/><circle cx="31" cy="500.8" r="1.5" fill="#f8f2ee"/><circle cx="30.3" cy="502.9" r="1.1" fill="#3b8fe0"/><path d="M28.6 506.2c0-2.6 3.6-2.6 3.6 0z" fill="#3b8fe0"/><circle cx="48.1" cy="502" r="3.9" fill="#1b7fd4"/><path d="M44.4 501a3.9 3.9 0 0 1 7.6 0.6c-1.2-1.6-3.4-2-5.2-1z" fill="#3fc27a"/><path d="M46.6 503.4a2.2 2.2 0 0 0 3.8 0.8c-1.5 0.4-2.4-0.4-2.4-1.6 0-0.6 0.4-1 1-1.2-1.4-0.2-2.6 0.8-2.4 2z" fill="#e9f4ff"/><rect x="62.2" y="498.4" width="5.8" height="7.2" fill="#e9ecef" stroke="#8a8f96" stroke-width="0.5"/><rect x="62.9" y="501.8" width="4.2" height="3" fill="#6fca3a"/><path d="M68.8 497.6l0.9 0.6-3.6 5.8-1.2 0.6 0.2-1.3z" fill="#e8a43a" stroke="#a85a1a" stroke-width="0.25"/><path d="M68.8 497.6l0.9 0.6 0.4-0.8-0.8-0.5z" fill="#d23a4a"/><rect x="79.2" y="499.2" width="7.6" height="5.8" fill="#15151a"/><rect x="79.2" y="499.2" width="7.6" height="1" fill="#5a5a60"/><path d="M80.4 502l1.6 0.9-1.6 0.9M83 504h2.4" stroke="#e8e8e8" stroke-width="0.5" fill="none"/><circle cx="100.3" cy="502" r="3.3" fill="#fff" stroke="#f39a1e" stroke-width="1.5"/><path d="M97.4 500.2a3.4 3.4 0 0 1 5.8 0" fill="none" stroke="#7a4ae0" stroke-width="1.6"/><circle cx="100.3" cy="502.2" r="0.8" fill="#555"/><rect x="114.2" y="498.3" width="7.4" height="7.4" rx="0.6" fill="#1f8e4a"/><path d="M115.6 500.4h4.6M115.6 502h4.6M115.6 503.6h4.6" stroke="#8fd0a6" stroke-width="0.5"/><rect x="131.8" y="498.4" width="7" height="7" rx="0.8" fill="#2fd05f"/><circle cx="135.3" cy="501.9" r="2.1" fill="#f2fff5"/><path d="M134.2 501.2c0.8-0.3 1.6-0.2 2.3 0.2M134.4 502.2c0.6-0.2 1.2-0.1 1.8 0.2" stroke="#2fd05f" stroke-width="0.4" fill="none"/><rect x="149" y="498.5" width="7" height="7" fill="#1b1b24"/><rect x="150.2" y="500.8" width="4.6" height="2.4" rx="0.6" fill="#2f8df0"/><rect x="151" y="501.4" width="2.2" height="1.1" fill="#bfe0ff"/><rect x="166.5" y="498.2" width="7.4" height="7.6" rx="1.6" fill="#df1524"/><rect x="168.7" y="499.8" width="3" height="4.4" rx="0.5" fill="none" stroke="#fff" stroke-width="0.7"/><path d="M169.4 501.4h1.6M169.4 502.6h1.6" stroke="#fff" stroke-width="0.4"/><rect x="163.6" y="507.7" width="13.2" height="0.8" fill="#3a9e68"/><rect x="183.8" y="498.2" width="7.4" height="7.4" rx="0.8" fill="#46b648"/><rect x="185" y="499" width="3.8" height="2.6" fill="#e6e6e6"/><rect x="184.6" y="502.4" width="4.4" height="2.4" fill="#5a6a78"/><circle cx="189.8" cy="503.6" r="1.3" fill="#d8f0d8"/><rect x="181" y="507.7" width="13" height="0.8" fill="#3a9e68"/><path d="M350.9 503l1.8-1.9 1.8 1.9" fill="none" stroke="#222" stroke-width="0.75"/><g fill="none" stroke="#222" stroke-width="0.65"><path d="M361.4 499.6h5.4v3.8h-3.4M361.4 499.6v2"/><rect x="360.6" y="502" width="2.4" height="2.6" fill="#f1f1f1"/><path d="M363.4 504.6h2.6"/></g><path d="M371.6 501.2h1.2l1.6-1.5v4.8l-1.6-1.5h-1.2z" fill="none" stroke="#222" stroke-width="0.6"/><path d="M375.6 500.6a2 2 0 0 1 0 2.8M376.8 499.6a3.4 3.4 0 0 1 0 4.8" fill="none" stroke="#555" stroke-width="0.5"/><g fill="none" stroke="#222" stroke-width="0.85"><circle cx="386.4" cy="503.6" r="1.3"/><path d="M387.3 502.6l2.4-2.4"/><path d="M389.4 499.4a1.4 1.4 0 0 1 1.8 1.8M390.6 498.4l0.6 0.8" stroke-width="0.7"/></g><text x="399.1" y="504.1" font-size="5.9" fill="#222" textLength="12.1" lengthAdjust="spacingAndGlyphs">15:25</text><path d="M420.4 499h6.6v4.8h-2.4l-0.9 1.1-0.9-1.1h-2.4z" fill="#151515"/><path d="M421.8 500.6h3.8M421.8 501.8h3.8" stroke="#777" stroke-width="0.35"/><rect x="431.6" y="494.8" width="7.6" height="13.6" fill="#f7f7f7"/><path d="M437.4 494.8v13.6" stroke="#d0d0d0" stroke-width="0.5"/></svg></div><div class="b" id="rightwin" style="left:439.2px;top:0;width:325.8px;height:510px;overflow:hidden;background:#fff"><div class="b" style="left:0px;top:15px;width:326px;height:24.2px;background:#e6e7eb;"></div><div class="b" style="left:0px;top:24px;width:0.7px;height:472px;background:#a9a9b0;"></div><span class="t" style="left:2.8px;top:15.70px;height:10px;line-height:10px;font-size:6.38px;color:#1c1c1c;transform:scaleX(0.8725);transform-origin:0 50%;text-decoration-thickness:0.3px;text-underline-offset:0.6px;text-decoration-color:#666;"><u>F</u>ichier</span><span class="t" style="left:25.3px;top:15.70px;height:10px;line-height:10px;font-size:6.38px;color:#1c1c1c;transform:scaleX(0.8821);transform-origin:0 50%;text-decoration-thickness:0.3px;text-underline-offset:0.6px;text-decoration-color:#666;">Éditio<u>n</u></span><span class="t" style="left:48.2px;top:15.70px;height:10px;line-height:10px;font-size:6.38px;color:#1c1c1c;transform:scaleX(0.9105);transform-origin:0 50%;text-decoration-thickness:0.3px;text-underline-offset:0.6px;text-decoration-color:#666;"><u>A</u>ffichage</span><span class="t" style="left:77.8px;top:15.70px;height:10px;line-height:10px;font-size:6.38px;color:#1c1c1c;transform:scaleX(0.8574);transform-origin:0 50%;text-decoration-thickness:0.3px;text-underline-offset:0.6px;text-decoration-color:#666;">A<u>l</u>ler à</span><span class="t" style="left:99.1px;top:15.70px;height:10px;line-height:10px;font-size:6.38px;color:#1c1c1c;transform:scaleX(0.8224);transform-origin:0 50%;text-decoration-thickness:0.3px;text-underline-offset:0.6px;text-decoration-color:#666;"><u>M</u>essages</span><span class="t" style="left:128.8px;top:15.70px;height:10px;line-height:10px;font-size:6.38px;color:#1c1c1c;transform:scaleX(0.8497);transform-origin:0 50%;text-decoration-thickness:0.3px;text-underline-offset:0.6px;text-decoration-color:#666;">É<u>v</u>énements et tâches</span><span class="t" style="left:188.2px;top:15.70px;height:10px;line-height:10px;font-size:6.38px;color:#1c1c1c;transform:scaleX(0.8959);transform-origin:0 50%;text-decoration-thickness:0.3px;text-underline-offset:0.6px;text-decoration-color:#666;"><u>O</u>utils</span><span class="t" style="left:208.7px;top:15.70px;height:10px;line-height:10px;font-size:6.38px;color:#1c1c1c;transform:scaleX(0.846);transform-origin:0 50%;text-decoration-thickness:0.3px;text-underline-offset:0.6px;text-decoration-color:#666;">Aid<u>e</u></span><div class="b" style="left:0.6px;top:24.2px;width:98.8px;height:15px;background:#f6f6f8;border-right:0.6px solid #cfcfd4"></div><div class="b" style="left:0.6px;top:24.0px;width:98.8px;height:1.9px;background:#4396ee;"></div><svg style="left:4.4px;top:28.6px" width="7.4" height="6.4" viewBox="0 0 7.4 6.4"><rect x="0.5" y="0.5" width="6.4" height="5.4" rx="1" fill="none" stroke="#2a2a33" stroke-width="1"/><path d="M1.6 3.3h1.2l0.5 0.9h0.9l0.5-0.9h1.2" fill="none" stroke="#2a2a33" stroke-width="0.6"/></svg><span class="t" style="left:15.8px;top:28.00px;height:10px;line-height:10px;font-size:6.38px;color:#7c7c84;transform:scaleX(0.8469);transform-origin:0 50%;-webkit-mask-image:linear-gradient(90deg,#000 85%,transparent);mask-image:linear-gradient(90deg,#000 85%,transparent);">Courrier entrant - sylvain.rival@</span><div class="b" style="left:0.6px;top:39.2px;width:325.4px;height:15.8px;background:#f6f6f8;border-bottom:0.6px solid #d0d0d5"></div><svg style="left:4.4px;top:43.4px" width="7.4" height="7.6" viewBox="0 0 7.4 7.6"><path d="M0.5 0.6h6.4v4.2h-2.1 M2.6 4.8h-2.1v-4.2" fill="none" stroke="#2a2a33" stroke-width="0.8"/><path d="M3.7 3v3.9M2.3 5.6l1.4 1.5 1.4-1.5" fill="none" stroke="#2a2a33" stroke-width="0.7"/></svg><span class="t" style="left:13.6px;top:43.10px;height:10px;line-height:10px;font-size:6.38px;color:#1c1c1c;transform:scaleX(0.7829);transform-origin:0 50%;">Relever</span><div class="b" style="left:35.0px;top:42.5px;width:0.5px;height:9px;background:#cfcfd4;"></div><svg style="left:36.800000000000004px;top:46.050000000000004px" width="3.6" height="2.3" viewBox="0 0 3.6 2.3"><path d="M0.5 0.5l1.3 1.3 1.3 -1.3" fill="none" stroke="#444" stroke-width="0.6"/></svg><svg style="left:46.6px;top:43.6px" width="7" height="7" viewBox="0 0 7 7"><path d="M0.6 6.4l0.5-1.9 3.9-3.9 1.4 1.4-3.9 3.9z" fill="#2a2a33"/></svg><span class="t" style="left:55.8px;top:43.10px;height:10px;line-height:10px;font-size:6.38px;color:#1c1c1c;transform:scaleX(0.7985);transform-origin:0 50%;">Écrire</span><svg style="left:77.6px;top:43.6px" width="8" height="7.4" viewBox="0 0 8 7.4"><path d="M1.4 0.5h5.2a0.9 0.9 0 0 1 0.9 0.9v2.8a0.9 0.9 0 0 1-0.9 0.9h-1.2l1 1.6-2.8-1.6h-2.2a0.9 0.9 0 0 1-0.9-0.9v-2.8a0.9 0.9 0 0 1 0.9-0.9z" fill="none" stroke="#2a2a33" stroke-width="0.8"/></svg><span class="t" style="left:87.4px;top:43.10px;height:10px;line-height:10px;font-size:6.38px;color:#1c1c1c;transform:scaleX(0.8523);transform-origin:0 50%;">Messagerie instantanée</span><svg style="left:153.2px;top:43.6px" width="7" height="7" viewBox="0 0 7 7"><rect x="0.5" y="0.5" width="6" height="6" rx="0.8" fill="none" stroke="#2a2a33" stroke-width="0.8"/><circle cx="3.5" cy="2.7" r="0.9" fill="#2a2a33"/><path d="M1.8 5.2c0-1.4 3.4-1.4 3.4 0z" fill="#2a2a33"/></svg><span class="t" style="left:162.8px;top:43.10px;height:10px;line-height:10px;font-size:6.38px;color:#1c1c1c;transform:scaleX(0.7901);transform-origin:0 50%;">Adresses</span><div class="b" style="left:188.8px;top:42.5px;width:0.5px;height:9px;background:#cfcfd4;"></div><svg style="left:194.0px;top:43.800000000000004px" width="7.4" height="7" viewBox="0 0 7.4 7"><path d="M0.6 0.9h2.7l3.4 3.3-2.4 2.3-3.7-3.4z" fill="none" stroke="#2a2a33" stroke-width="0.8" stroke-linejoin="round"/></svg><span class="t" style="left:202.2px;top:43.10px;height:10px;line-height:10px;font-size:6.38px;color:#1c1c1c;transform:scaleX(0.8819);transform-origin:0 50%;">Étiquette</span><svg style="left:227.29999999999998px;top:46.099999999999994px" width="3.8" height="2.4" viewBox="0 0 3.8 2.4"><path d="M0.5 0.5l1.4 1.4 1.4 -1.4" fill="none" stroke="#222" stroke-width="0.8"/></svg><div class="b" style="left:235.2px;top:41.5px;width:44.2px;height:10.6px;background:#dfdfe4;border:0.6px solid #bcbcc4;border-radius:0.8px"></div><svg style="left:238.4px;top:44.2px" width="6" height="6" viewBox="0 0 6 6"><path d="M0.5 0.6h5l-1.9 2.3v2.4l-1.2-0.6v-1.8z" fill="none" stroke="#2a2a33" stroke-width="0.7" stroke-linejoin="round"/></svg><span class="t" style="left:247.1px;top:43.10px;height:10px;line-height:10px;font-size:6.38px;color:#1c1c1c;transform:scaleX(0.8642);transform-origin:0 50%;">Filtre rapide</span><div class="b" style="left:0.6px;top:55px;width:127px;height:430px;background:#ffffff;"></div><div class="b" style="left:0.6px;top:55.3px;width:126.6px;height:10.9px;background:#e4e4e6;border-top:0.7px solid #9c9ca2;border-bottom:0.8px solid #8e8e94"></div><span class="t" style="left:4.6px;top:57.20px;height:10px;line-height:10px;font-size:6.38px;color:#1c1c1c;transform:scaleX(0.822);transform-origin:0 50%;">Tous les dossiers</span><svg style="left:119.9px;top:59.5px" width="4.2" height="2.6" viewBox="0 0 4.2 2.6"><path d="M0.5 0.5l1.6 1.6 1.6 -1.6" fill="none" stroke="#222" stroke-width="0.9"/></svg><div class="b" style="left:119.6px;top:67px;width:7.7px;height:417.6px;background:#f3f3f5;"></div><div class="b" style="left:119.6px;top:77.2px;width:7.7px;height:289.7px;background:#dedede;"></div><svg style="left:119.1px;top:67px" width="8.2" height="418" viewBox="0 0 8.2 418"><g fill="none" stroke="#909096" stroke-width="0.6"><path d="M2.4 5.8l1.5-1.6 1.5 1.6"/><path d="M2.4 413l1.5 1.6 1.5-1.6"/></g></svg><div class="b" style="left:127.2px;top:55px;width:0.8px;height:430px;background:#c2c2c7;"></div><div class="b" style="left:0.6px;top:66.6px;width:118.5px;height:418px;overflow:hidden"><svg style="left:2.2000000000000006px;top:4.500000000000005px" width="5.8" height="3.4" viewBox="0 0 5.8 3.4"><path d="M0.5 0.5l2.4 2.4 2.4 -2.4" fill="none" stroke="#111" stroke-width="1.25"/></svg><svg style="left:9.200000000000001px;top:2.5000000000000058px" width="8" height="7" viewBox="0 0 8 7"><rect x="0.5" y="0.5" width="7" height="5.4" rx="1.2" fill="#fff" stroke="#2f86ee" stroke-width="0.95"/><path d="M2 2.4h3.2" stroke="#2f86ee" stroke-width="0.8"/><rect x="4.3" y="3.9" width="3.2" height="2.6" rx="0.5" fill="#2f86ee"/></svg><span class="t" style="left:19.7px;top:2.00px;height:10px;line-height:10px;font-size:6.38px;color:#111;font-weight:bold;transform:scaleX(0.8224);transform-origin:0 50%;">sylvain.rival@brassac.fr</span><div class="b" style="left:0px;top:10.675000000000006px;width:118.5px;height:10.9px;background:#e4e6ec;"></div><svg style="left:6.5px;top:14.875000000000007px" width="5.8" height="3.4" viewBox="0 0 5.8 3.4"><path d="M0.5 0.5l2.4 2.4 2.4 -2.4" fill="none" stroke="#111" stroke-width="1.25"/></svg><svg style="left:13.0px;top:12.875000000000005px" width="8" height="7" viewBox="0 0 8 7"><rect x="0.5" y="0.5" width="7" height="6" rx="1.1" fill="#fff" stroke="#1f7be6" stroke-width="0.95"/><path d="M1.4 1.9l2.6 1.9 2.6-1.9 M0.9 4.5h1.5l0.6 0.8h2l0.6-0.8h1.5" fill="none" stroke="#1f7be6" stroke-width="0.6"/></svg><span class="t" style="left:23.8px;top:12.38px;height:10px;line-height:10px;font-size:6.38px;color:#1a6fd6;font-weight:bold;transform:scaleX(0.8813);transform-origin:0 50%;">Courrier entrant (3)</span><svg style="left:17.7px;top:23.050000000000004px" width="5.6" height="7.2" viewBox="0 0 5.6 7.2"><rect x="0.5" y="0.5" width="4.6" height="6.2" rx="0.8" fill="#fff" stroke="#3d3d55" stroke-width="0.8"/><path d="M2.8 1.8v0.7M2.8 3.3v0.7M2.8 4.8v0.6" stroke="#3d3d55" stroke-width="0.7"/></svg><span class="t" style="left:27.2px;top:22.75px;height:10px;line-height:10px;font-size:6.38px;color:#1c1c1c;transform:scaleX(0.8876);transform-origin:0 50%;">Modèles</span><svg style="left:16.9px;top:33.72500000000001px" width="7.2" height="6.8" viewBox="0 0 7.2 6.8"><path d="M6.5 0.6l-1.3 5.2-2.2-1.5-0.4 1.7-0.7-2.2-1.4-0.9z M6.5 0.6l-3.5 3.7" fill="none" stroke="#3d3d55" stroke-width="0.75" stroke-linejoin="round"/></svg><span class="t" style="left:27.2px;top:33.13px;height:10px;line-height:10px;font-size:6.38px;color:#1c1c1c;transform:scaleX(0.8342);transform-origin:0 50%;">Envoyés</span><svg style="left:17.6px;top:43.7px" width="5.8" height="7.4" viewBox="0 0 5.8 7.4"><path d="M0.4 1.5h5M2 0.6h1.8" stroke="#3d3d55" stroke-width="0.8" fill="none"/><path d="M0.9 1.6v4.5c0 0.4 0.3 0.7 0.7 0.7h2.6c0.4 0 0.7-0.3 0.7-0.7v-4.5z" fill="#3d3d55" fill-opacity="0.35" stroke="#3d3d55" stroke-width="0.8"/></svg><span class="t" style="left:27.2px;top:43.50px;height:10px;line-height:10px;font-size:6.38px;color:#111;font-weight:bold;transform:scaleX(0.8694);transform-origin:0 50%;">Corbeille (164)</span><svg style="left:16.6px;top:54.575px" width="7.8" height="6.6" viewBox="0 0 7.8 6.6"><path d="M0.6 1.1c0-0.3 0.2-0.5 0.5-0.5h1.7l0.8 0.9h3.1c0.3 0 0.5 0.2 0.5 0.5v3.5c0 0.3-0.2 0.5-0.5 0.5h-5.6c-0.3 0-0.5-0.2-0.5-0.5z" fill="#fff" stroke="#3d3d55" stroke-width="0.85"/></svg><span class="t" style="left:27.2px;top:53.88px;height:10px;line-height:10px;font-size:6.38px;color:#1c1c1c;transform:scaleX(0.8893);transform-origin:0 50%;">Brouillons</span><svg style="left:10.1px;top:66.75px" width="5.8" height="3.4" viewBox="0 0 5.8 3.4"><path d="M0.5 0.5l2.4 2.4 2.4 -2.4" fill="none" stroke="#111" stroke-width="1.25"/></svg><svg style="left:16.6px;top:64.95px" width="7.8" height="6.6" viewBox="0 0 7.8 6.6"><path d="M0.6 1.1c0-0.3 0.2-0.5 0.5-0.5h1.7l0.8 0.9h3.1c0.3 0 0.5 0.2 0.5 0.5v3.5c0 0.3-0.2 0.5-0.5 0.5h-5.6c-0.3 0-0.5-0.2-0.5-0.5z" fill="#fff" stroke="#3d3d55" stroke-width="0.85"/></svg><span class="t" style="left:27.2px;top:64.25px;height:10px;line-height:10px;font-size:6.38px;color:#9a9aa0;font-style:italic;transform:scaleX(0.8365);transform-origin:0 50%;">INBOX</span><svg style="left:21.8px;top:74.825px" width="5.8" height="7.4" viewBox="0 0 5.8 7.4"><path d="M2.6 0.6c0.3 1.2 2.6 2.2 2.6 4.1a2.3 2.3 0 0 1-4.6 0c0-0.9 0.5-1.5 1-2 0.2 0.5 0.5 0.8 0.8 0.9 0.3-1 0.4-2 0.2-3z" fill="none" stroke="#3d3d55" stroke-width="0.8" stroke-linejoin="round"/></svg><span class="t" style="left:31.1px;top:74.62px;height:10px;line-height:10px;font-size:6.38px;color:#111;font-weight:bold;transform:scaleX(0.8527);transform-origin:0 50%;">Indésirables (52)</span><svg style="left:20.8px;top:85.7px" width="7.8" height="6.6" viewBox="0 0 7.8 6.6"><path d="M0.6 1.1c0-0.3 0.2-0.5 0.5-0.5h1.7l0.8 0.9h3.1c0.3 0 0.5 0.2 0.5 0.5v3.5c0 0.3-0.2 0.5-0.5 0.5h-5.6c-0.3 0-0.5-0.2-0.5-0.5z" fill="#fff" stroke="#3d3d55" stroke-width="0.85"/></svg><span class="t" style="left:31.1px;top:85.00px;height:10px;line-height:10px;font-size:6.38px;color:#1c1c1c;transform:scaleX(0.8565);transform-origin:0 50%;">Actu site - entreprises + assos</span><svg style="left:20.8px;top:96.075px" width="7.8" height="6.6" viewBox="0 0 7.8 6.6"><path d="M0.6 1.1c0-0.3 0.2-0.5 0.5-0.5h1.7l0.8 0.9h3.1c0.3 0 0.5 0.2 0.5 0.5v3.5c0 0.3-0.2 0.5-0.5 0.5h-5.6c-0.3 0-0.5-0.2-0.5-0.5z" fill="#fff" stroke="#3d3d55" stroke-width="0.85"/></svg><span class="t" style="left:31.1px;top:95.38px;height:10px;line-height:10px;font-size:6.38px;color:#1c1c1c;transform:scaleX(0.9237);transform-origin:0 50%;">Administratif</span><svg style="left:20.8px;top:106.45px" width="7.8" height="6.6" viewBox="0 0 7.8 6.6"><path d="M0.6 1.1c0-0.3 0.2-0.5 0.5-0.5h1.7l0.8 0.9h3.1c0.3 0 0.5 0.2 0.5 0.5v3.5c0 0.3-0.2 0.5-0.5 0.5h-5.6c-0.3 0-0.5-0.2-0.5-0.5z" fill="#fff" stroke="#3d3d55" stroke-width="0.85"/></svg><span class="t" style="left:31.1px;top:105.75px;height:10px;line-height:10px;font-size:6.38px;color:#1c1c1c;transform:scaleX(0.8287);transform-origin:0 50%;">Drafts</span><svg style="left:14.1px;top:118.625px" width="5.8" height="3.4" viewBox="0 0 5.8 3.4"><path d="M0.5 0.5l2.4 2.4 2.4 -2.4" fill="none" stroke="#111" stroke-width="1.25"/></svg><svg style="left:20.8px;top:116.825px" width="7.8" height="6.6" viewBox="0 0 7.8 6.6"><path d="M0.6 1.1c0-0.3 0.2-0.5 0.5-0.5h1.7l0.8 0.9h3.1c0.3 0 0.5 0.2 0.5 0.5v3.5c0 0.3-0.2 0.5-0.5 0.5h-5.6c-0.3 0-0.5-0.2-0.5-0.5z" fill="#fff" stroke="#3d3d55" stroke-width="0.85"/></svg><span class="t" style="left:31.1px;top:116.12px;height:10px;line-height:10px;font-size:6.38px;color:#1c1c1c;transform:scaleX(0.9143);transform-origin:0 50%;">Informatique</span><svg style="left:18.85px;top:127.79999999999998px" width="3.3" height="5.6" viewBox="0 0 3.3 5.6"><path d="M0.5 0.5l2.3 2.3 -2.3 2.3" fill="none" stroke="#111" stroke-width="1.25"/></svg><svg style="left:24.7px;top:127.2px" width="7.8" height="6.6" viewBox="0 0 7.8 6.6"><path d="M0.6 1.1c0-0.3 0.2-0.5 0.5-0.5h1.7l0.8 0.9h3.1c0.3 0 0.5 0.2 0.5 0.5v3.5c0 0.3-0.2 0.5-0.5 0.5h-5.6c-0.3 0-0.5-0.2-0.5-0.5z" fill="#fff" stroke="#3d3d55" stroke-width="0.85"/></svg><span class="t" style="left:35.0px;top:126.50px;height:10px;line-height:10px;font-size:6.38px;color:#1c1c1c;transform:scaleX(0.8813);transform-origin:0 50%;">Devis Informatique Mairie</span><svg style="left:18.85px;top:138.17499999999998px" width="3.3" height="5.6" viewBox="0 0 3.3 5.6"><path d="M0.5 0.5l2.3 2.3 -2.3 2.3" fill="none" stroke="#111" stroke-width="1.25"/></svg><svg style="left:24.7px;top:137.57500000000002px" width="7.8" height="6.6" viewBox="0 0 7.8 6.6"><path d="M0.6 1.1c0-0.3 0.2-0.5 0.5-0.5h1.7l0.8 0.9h3.1c0.3 0 0.5 0.2 0.5 0.5v3.5c0 0.3-0.2 0.5-0.5 0.5h-5.6c-0.3 0-0.5-0.2-0.5-0.5z" fill="#fff" stroke="#3d3d55" stroke-width="0.85"/></svg><span class="t" style="left:35.0px;top:136.88px;height:10px;line-height:10px;font-size:6.38px;color:#111;font-weight:bold;transform:scaleX(0.8413);transform-origin:0 50%;">Site Brassac ( • 54)</span><svg style="left:20.8px;top:147.95000000000002px" width="7.8" height="6.6" viewBox="0 0 7.8 6.6"><path d="M0.6 1.1c0-0.3 0.2-0.5 0.5-0.5h1.7l0.8 0.9h3.1c0.3 0 0.5 0.2 0.5 0.5v3.5c0 0.3-0.2 0.5-0.5 0.5h-5.6c-0.3 0-0.5-0.2-0.5-0.5z" fill="#fff" stroke="#3d3d55" stroke-width="0.85"/></svg><span class="t" style="left:31.1px;top:147.25px;height:10px;line-height:10px;font-size:6.38px;color:#1c1c1c;transform:scaleX(0.8735);transform-origin:0 50%;">Mise à jour du site - Associations</span><svg style="left:20.8px;top:158.32500000000002px" width="7.8" height="6.6" viewBox="0 0 7.8 6.6"><path d="M0.6 1.1c0-0.3 0.2-0.5 0.5-0.5h1.7l0.8 0.9h3.1c0.3 0 0.5 0.2 0.5 0.5v3.5c0 0.3-0.2 0.5-0.5 0.5h-5.6c-0.3 0-0.5-0.2-0.5-0.5z" fill="#fff" stroke="#3d3d55" stroke-width="0.85"/></svg><span class="t" style="left:31.1px;top:157.62px;height:10px;line-height:10px;font-size:6.38px;color:#1c1c1c;transform:scaleX(0.8579);transform-origin:0 50%;">Mise à jour du site - Entreprises</span><svg style="left:20.8px;top:168.70000000000002px" width="7.8" height="6.6" viewBox="0 0 7.8 6.6"><path d="M0.6 1.1c0-0.3 0.2-0.5 0.5-0.5h1.7l0.8 0.9h3.1c0.3 0 0.5 0.2 0.5 0.5v3.5c0 0.3-0.2 0.5-0.5 0.5h-5.6c-0.3 0-0.5-0.2-0.5-0.5z" fill="#fff" stroke="#3d3d55" stroke-width="0.85"/></svg><span class="t" style="left:31.1px;top:168.00px;height:10px;line-height:10px;font-size:6.38px;color:#1c1c1c;transform:scaleX(0.86);transform-origin:0 50%;">Poésie-slam Même pas Peur</span><svg style="left:20.8px;top:179.07500000000002px" width="7.8" height="6.6" viewBox="0 0 7.8 6.6"><path d="M0.6 1.1c0-0.3 0.2-0.5 0.5-0.5h1.7l0.8 0.9h3.1c0.3 0 0.5 0.2 0.5 0.5v3.5c0 0.3-0.2 0.5-0.5 0.5h-5.6c-0.3 0-0.5-0.2-0.5-0.5z" fill="#fff" stroke="#3d3d55" stroke-width="0.85"/></svg><span class="t" style="left:31.1px;top:178.38px;height:10px;line-height:10px;font-size:6.38px;color:#1c1c1c;transform:scaleX(0.8076);transform-origin:0 50%;">Sent</span><svg style="left:20.8px;top:189.45000000000002px" width="7.8" height="6.6" viewBox="0 0 7.8 6.6"><path d="M0.6 1.1c0-0.3 0.2-0.5 0.5-0.5h1.7l0.8 0.9h3.1c0.3 0 0.5 0.2 0.5 0.5v3.5c0 0.3-0.2 0.5-0.5 0.5h-5.6c-0.3 0-0.5-0.2-0.5-0.5z" fill="#fff" stroke="#3d3d55" stroke-width="0.85"/></svg><span class="t" style="left:31.1px;top:188.75px;height:10px;line-height:10px;font-size:6.38px;color:#1c1c1c;transform:scaleX(0.8567);transform-origin:0 50%;">SIGB et Informatique</span><svg style="left:20.8px;top:199.82500000000002px" width="7.8" height="6.6" viewBox="0 0 7.8 6.6"><path d="M0.6 1.1c0-0.3 0.2-0.5 0.5-0.5h1.7l0.8 0.9h3.1c0.3 0 0.5 0.2 0.5 0.5v3.5c0 0.3-0.2 0.5-0.5 0.5h-5.6c-0.3 0-0.5-0.2-0.5-0.5z" fill="#fff" stroke="#3d3d55" stroke-width="0.85"/></svg><span class="t" style="left:31.1px;top:199.12px;height:10px;line-height:10px;font-size:6.38px;color:#1c1c1c;transform:scaleX(0.7844);transform-origin:0 50%;">Trash</span><svg style="left:2.2000000000000006px;top:212.00000000000003px" width="5.8" height="3.4" viewBox="0 0 5.8 3.4"><path d="M0.5 0.5l2.4 2.4 2.4 -2.4" fill="none" stroke="#111" stroke-width="1.25"/></svg><svg style="left:9.200000000000001px;top:210.0px" width="8" height="7" viewBox="0 0 8 7"><rect x="0.5" y="0.5" width="7" height="5.4" rx="1.2" fill="#fff" stroke="#2f86ee" stroke-width="0.95"/><path d="M2 2.4h3.2" stroke="#2f86ee" stroke-width="0.8"/><rect x="4.3" y="3.9" width="3.2" height="2.6" rx="0.5" fill="#2f86ee"/></svg><span class="t" style="left:19.7px;top:209.50px;height:10px;line-height:10px;font-size:6.38px;color:#111;font-weight:bold;transform:scaleX(0.8328);transform-origin:0 50%;">panneau@brassac.fr</span><svg style="left:8.05px;top:221.17499999999998px" width="3.3" height="5.6" viewBox="0 0 3.3 5.6"><path d="M0.5 0.5l2.3 2.3 -2.3 2.3" fill="none" stroke="#111" stroke-width="1.25"/></svg><svg style="left:13.0px;top:220.375px" width="8" height="7" viewBox="0 0 8 7"><rect x="0.5" y="0.5" width="7" height="6" rx="1.1" fill="#fff" stroke="#f09d4e" stroke-width="0.95"/><path d="M1.4 1.9l2.6 1.9 2.6-1.9 M0.9 4.5h1.5l0.6 0.8h2l0.6-0.8h1.5" fill="none" stroke="#f09d4e" stroke-width="0.6"/></svg><span class="t" style="left:23.8px;top:219.88px;height:10px;line-height:10px;font-size:6.38px;color:#111;font-weight:bold;transform:scaleX(0.8821);transform-origin:0 50%;">Courrier entrant ( • 123)</span><svg style="left:2.2000000000000006px;top:232.75000000000003px" width="5.8" height="3.4" viewBox="0 0 5.8 3.4"><path d="M0.5 0.5l2.4 2.4 2.4 -2.4" fill="none" stroke="#111" stroke-width="1.25"/></svg><svg style="left:9.200000000000001px;top:230.75px" width="8" height="7" viewBox="0 0 8 7"><rect x="0.5" y="0.5" width="7" height="5.4" rx="1.2" fill="#fff" stroke="#2f86ee" stroke-width="0.95"/><path d="M2 2.4h3.2" stroke="#2f86ee" stroke-width="0.8"/><rect x="4.3" y="3.9" width="3.2" height="2.6" rx="0.5" fill="#2f86ee"/></svg><span class="t" style="left:19.7px;top:230.25px;height:10px;line-height:10px;font-size:6.38px;color:#1a6fd6;font-weight:bold;transform:scaleX(0.822);transform-origin:0 50%;">site@brassac.fr</span><svg style="left:8.05px;top:241.92499999999998px" width="3.3" height="5.6" viewBox="0 0 3.3 5.6"><path d="M0.5 0.5l2.3 2.3 -2.3 2.3" fill="none" stroke="#111" stroke-width="1.25"/></svg><svg style="left:13.0px;top:241.125px" width="8" height="7" viewBox="0 0 8 7"><rect x="0.5" y="0.5" width="7" height="6" rx="1.1" fill="#fff" stroke="#f09d4e" stroke-width="0.95"/><path d="M1.4 1.9l2.6 1.9 2.6-1.9 M0.9 4.5h1.5l0.6 0.8h2l0.6-0.8h1.5" fill="none" stroke="#f09d4e" stroke-width="0.6"/></svg><span class="t" style="left:23.8px;top:240.62px;height:10px;line-height:10px;font-size:6.38px;color:#111;font-weight:bold;transform:scaleX(0.8821);transform-origin:0 50%;">Courrier entrant ( • 300)</span><svg style="left:2.2000000000000006px;top:253.50000000000003px" width="5.8" height="3.4" viewBox="0 0 5.8 3.4"><path d="M0.5 0.5l2.4 2.4 2.4 -2.4" fill="none" stroke="#111" stroke-width="1.25"/></svg><svg style="left:9.200000000000001px;top:251.5px" width="8" height="7" viewBox="0 0 8 7"><rect x="0.5" y="0.5" width="7" height="5.4" rx="1.2" fill="#fff" stroke="#2f86ee" stroke-width="0.95"/><path d="M2 2.4h3.2" stroke="#2f86ee" stroke-width="0.8"/><rect x="4.3" y="3.9" width="3.2" height="2.6" rx="0.5" fill="#2f86ee"/></svg><span class="t" style="left:19.7px;top:251.00px;height:10px;line-height:10px;font-size:6.38px;color:#111;font-weight:bold;transform:scaleX(0.8456);transform-origin:0 50%;">ecmbrassac@orange.fr</span><svg style="left:6.5px;top:263.875px" width="5.8" height="3.4" viewBox="0 0 5.8 3.4"><path d="M0.5 0.5l2.4 2.4 2.4 -2.4" fill="none" stroke="#111" stroke-width="1.25"/></svg><svg style="left:13.0px;top:261.875px" width="8" height="7" viewBox="0 0 8 7"><rect x="0.5" y="0.5" width="7" height="6" rx="1.1" fill="#fff" stroke="#f09d4e" stroke-width="0.95"/><path d="M1.4 1.9l2.6 1.9 2.6-1.9 M0.9 4.5h1.5l0.6 0.8h2l0.6-0.8h1.5" fill="none" stroke="#f09d4e" stroke-width="0.6"/></svg><span class="t" style="left:23.8px;top:261.38px;height:10px;line-height:10px;font-size:6.38px;color:#111;font-weight:bold;transform:scaleX(0.8813);transform-origin:0 50%;">Courrier entrant (2)</span><svg style="left:17.7px;top:272.04999999999995px" width="5.6" height="7.2" viewBox="0 0 5.6 7.2"><rect x="0.5" y="0.5" width="4.6" height="6.2" rx="0.8" fill="#fff" stroke="#3d3d55" stroke-width="0.8"/><path d="M2.8 1.8v0.7M2.8 3.3v0.7M2.8 4.8v0.6" stroke="#3d3d55" stroke-width="0.7"/></svg><span class="t" style="left:27.2px;top:271.75px;height:10px;line-height:10px;font-size:6.38px;color:#1c1c1c;transform:scaleX(0.8893);transform-origin:0 50%;">Brouillons</span><svg style="left:16.9px;top:282.72499999999997px" width="7.2" height="6.8" viewBox="0 0 7.2 6.8"><path d="M6.5 0.6l-1.3 5.2-2.2-1.5-0.4 1.7-0.7-2.2-1.4-0.9z M6.5 0.6l-3.5 3.7" fill="none" stroke="#3d3d55" stroke-width="0.75" stroke-linejoin="round"/></svg><span class="t" style="left:27.2px;top:282.12px;height:10px;line-height:10px;font-size:6.38px;color:#111;font-weight:bold;transform:scaleX(0.8325);transform-origin:0 50%;">Envoyés (5)</span><svg style="left:11.65px;top:293.79999999999995px" width="3.3" height="5.6" viewBox="0 0 3.3 5.6"><path d="M0.5 0.5l2.3 2.3 -2.3 2.3" fill="none" stroke="#111" stroke-width="1.25"/></svg><svg style="left:16.8px;top:293.09999999999997px" width="7.4" height="6.6" viewBox="0 0 7.4 6.6"><path d="M0.6 3.3l1.2-2.5h3.8l1.2 2.5v2.2c0 0.3-0.2 0.5-0.5 0.5h-5.2c-0.3 0-0.5-0.2-0.5-0.5z M0.6 3.3h1.9l0.5 0.9h1.4l0.5-0.9h1.9" fill="none" stroke="#3d3d55" stroke-width="0.75" stroke-linejoin="round"/></svg><span class="t" style="left:27.2px;top:292.50px;height:10px;line-height:10px;font-size:6.38px;color:#1c1c1c;transform:scaleX(0.8588);transform-origin:0 50%;">Archives</span><svg style="left:17.6px;top:303.075px" width="5.8" height="7.4" viewBox="0 0 5.8 7.4"><path d="M2.6 0.6c0.3 1.2 2.6 2.2 2.6 4.1a2.3 2.3 0 0 1-4.6 0c0-0.9 0.5-1.5 1-2 0.2 0.5 0.5 0.8 0.8 0.9 0.3-1 0.4-2 0.2-3z" fill="none" stroke="#1f7be6" stroke-width="0.8" stroke-linejoin="round"/></svg><span class="t" style="left:27.2px;top:302.88px;height:10px;line-height:10px;font-size:6.38px;color:#1a6fd6;font-weight:bold;transform:scaleX(0.8603);transform-origin:0 50%;">QUARANTAINE (50)</span><svg style="left:17.6px;top:313.45px" width="5.8" height="7.4" viewBox="0 0 5.8 7.4"><path d="M0.4 1.5h5M2 0.6h1.8" stroke="#3d3d55" stroke-width="0.8" fill="none"/><path d="M0.9 1.6v4.5c0 0.4 0.3 0.7 0.7 0.7h2.6c0.4 0 0.7-0.3 0.7-0.7v-4.5z" fill="#3d3d55" fill-opacity="0.35" stroke="#3d3d55" stroke-width="0.8"/></svg><span class="t" style="left:27.2px;top:313.25px;height:10px;line-height:10px;font-size:6.38px;color:#1c1c1c;transform:scaleX(0.874);transform-origin:0 50%;">Corbeille</span><svg style="left:16.6px;top:324.325px" width="7.8" height="6.6" viewBox="0 0 7.8 6.6"><path d="M0.6 1.1c0-0.3 0.2-0.5 0.5-0.5h1.7l0.8 0.9h3.1c0.3 0 0.5 0.2 0.5 0.5v3.5c0 0.3-0.2 0.5-0.5 0.5h-5.6c-0.3 0-0.5-0.2-0.5-0.5z" fill="#fff" stroke="#3d3d55" stroke-width="0.85"/></svg><span class="t" style="left:27.2px;top:323.62px;height:10px;line-height:10px;font-size:6.38px;color:#1c1c1c;transform:scaleX(0.8883);transform-origin:0 50%;">animations</span><svg style="left:16.6px;top:334.7px" width="7.8" height="6.6" viewBox="0 0 7.8 6.6"><path d="M0.6 1.1c0-0.3 0.2-0.5 0.5-0.5h1.7l0.8 0.9h3.1c0.3 0 0.5 0.2 0.5 0.5v3.5c0 0.3-0.2 0.5-0.5 0.5h-5.6c-0.3 0-0.5-0.2-0.5-0.5z" fill="#fff" stroke="#3d3d55" stroke-width="0.85"/></svg><span class="t" style="left:27.2px;top:334.00px;height:10px;line-height:10px;font-size:6.38px;color:#1c1c1c;transform:scaleX(0.8938);transform-origin:0 50%;">Auteur</span><svg style="left:16.6px;top:345.075px" width="7.8" height="6.6" viewBox="0 0 7.8 6.6"><path d="M0.6 1.1c0-0.3 0.2-0.5 0.5-0.5h1.7l0.8 0.9h3.1c0.3 0 0.5 0.2 0.5 0.5v3.5c0 0.3-0.2 0.5-0.5 0.5h-5.6c-0.3 0-0.5-0.2-0.5-0.5z" fill="#fff" stroke="#3d3d55" stroke-width="0.85"/></svg><span class="t" style="left:27.2px;top:344.38px;height:10px;line-height:10px;font-size:6.38px;color:#1c1c1c;transform:scaleX(0.969);transform-origin:0 50%;">bdt</span><svg style="left:16.6px;top:355.45px" width="7.8" height="6.6" viewBox="0 0 7.8 6.6"><path d="M0.6 1.1c0-0.3 0.2-0.5 0.5-0.5h1.7l0.8 0.9h3.1c0.3 0 0.5 0.2 0.5 0.5v3.5c0 0.3-0.2 0.5-0.5 0.5h-5.6c-0.3 0-0.5-0.2-0.5-0.5z" fill="#fff" stroke="#3d3d55" stroke-width="0.85"/></svg><span class="t" style="left:27.2px;top:354.75px;height:10px;line-height:10px;font-size:6.38px;color:#1c1c1c;transform:scaleX(0.8455);transform-origin:0 50%;">caf</span><svg style="left:16.6px;top:365.825px" width="7.8" height="6.6" viewBox="0 0 7.8 6.6"><path d="M0.6 1.1c0-0.3 0.2-0.5 0.5-0.5h1.7l0.8 0.9h3.1c0.3 0 0.5 0.2 0.5 0.5v3.5c0 0.3-0.2 0.5-0.5 0.5h-5.6c-0.3 0-0.5-0.2-0.5-0.5z" fill="#fff" stroke="#3d3d55" stroke-width="0.85"/></svg><span class="t" style="left:27.2px;top:365.12px;height:10px;line-height:10px;font-size:6.38px;color:#1c1c1c;transform:scaleX(0.8945);transform-origin:0 50%;">coulier</span><svg style="left:16.6px;top:376.2px" width="7.8" height="6.6" viewBox="0 0 7.8 6.6"><path d="M0.6 1.1c0-0.3 0.2-0.5 0.5-0.5h1.7l0.8 0.9h3.1c0.3 0 0.5 0.2 0.5 0.5v3.5c0 0.3-0.2 0.5-0.5 0.5h-5.6c-0.3 0-0.5-0.2-0.5-0.5z" fill="#fff" stroke="#3d3d55" stroke-width="0.85"/></svg><span class="t" style="left:27.2px;top:375.50px;height:10px;line-height:10px;font-size:6.38px;color:#1c1c1c;transform:scaleX(0.8255);transform-origin:0 50%;">fete des 10 ans</span><svg style="left:16.6px;top:386.575px" width="7.8" height="6.6" viewBox="0 0 7.8 6.6"><path d="M0.6 1.1c0-0.3 0.2-0.5 0.5-0.5h1.7l0.8 0.9h3.1c0.3 0 0.5 0.2 0.5 0.5v3.5c0 0.3-0.2 0.5-0.5 0.5h-5.6c-0.3 0-0.5-0.2-0.5-0.5z" fill="#fff" stroke="#3d3d55" stroke-width="0.85"/></svg><span class="t" style="left:27.2px;top:385.88px;height:10px;line-height:10px;font-size:6.38px;color:#1c1c1c;transform:scaleX(0.9044);transform-origin:0 50%;">Mairie</span><svg style="left:16.6px;top:396.95px" width="7.8" height="6.6" viewBox="0 0 7.8 6.6"><path d="M0.6 1.1c0-0.3 0.2-0.5 0.5-0.5h1.7l0.8 0.9h3.1c0.3 0 0.5 0.2 0.5 0.5v3.5c0 0.3-0.2 0.5-0.5 0.5h-5.6c-0.3 0-0.5-0.2-0.5-0.5z" fill="#fff" stroke="#3d3d55" stroke-width="0.85"/></svg><span class="t" style="left:27.2px;top:396.25px;height:10px;line-height:10px;font-size:6.38px;color:#1c1c1c;transform:scaleX(0.8763);transform-origin:0 50%;">Marc Durand</span><svg style="left:16.6px;top:407.325px" width="7.8" height="6.6" viewBox="0 0 7.8 6.6"><path d="M0.6 1.1c0-0.3 0.2-0.5 0.5-0.5h1.7l0.8 0.9h3.1c0.3 0 0.5 0.2 0.5 0.5v3.5c0 0.3-0.2 0.5-0.5 0.5h-5.6c-0.3 0-0.5-0.2-0.5-0.5z" fill="#fff" stroke="#3d3d55" stroke-width="0.85"/></svg><span class="t" style="left:27.2px;top:406.62px;height:10px;line-height:10px;font-size:6.38px;color:#1c1c1c;transform:scaleX(0.9125);transform-origin:0 50%;">mutuelle</span><svg style="left:16.6px;top:417.7px" width="7.8" height="6.6" viewBox="0 0 7.8 6.6"><path d="M0.6 1.1c0-0.3 0.2-0.5 0.5-0.5h1.7l0.8 0.9h3.1c0.3 0 0.5 0.2 0.5 0.5v3.5c0 0.3-0.2 0.5-0.5 0.5h-5.6c-0.3 0-0.5-0.2-0.5-0.5z" fill="#fff" stroke="#3d3d55" stroke-width="0.85"/></svg></div><div class="b" style="left:128.0px;top:55px;width:198.0px;height:17.3px;background:#ececf0;border-bottom:0.6px solid #c9c9d0"></div><svg style="left:133.2px;top:60px" width="7" height="7.4" viewBox="0 0 7 7.4"><path d="M2.6 0.7l3.2 3.2-1 0.3-1 1 0.2 1.5-3.3-3.3 1.5 0.2 1-1z" fill="none" stroke="#2a2a33" stroke-width="0.8" stroke-linejoin="round"/><path d="M4.4 5.2l1.8 1.8" stroke="#2a2a33" stroke-width="0.8"/></svg><div class="b" style="left:145.2px;top:58.4px;width:0.5px;height:10.5px;background:#c9c9d0;"></div><svg style="left:151.4px;top:60px" width="5.4" height="7" viewBox="0 0 5.4 7"><path d="M0.6 0.6h4.2v5.7l-2.1-1.7-2.1 1.7z" fill="none" stroke="#2a2a33" stroke-width="0.9" stroke-linejoin="round"/><path d="M1.8 2.4h1.8" stroke="#2a2a33" stroke-width="0.8"/></svg><span class="t" style="left:160.8px;top:59.60px;height:10px;line-height:10px;font-size:6.38px;color:#1c1c1c;transform:scaleX(0.8462);transform-origin:0 50%;">Non lus</span><svg style="left:0;top:0" width="1" height="1"><polygon points="189.80,60.30 190.70,62.46 193.03,62.65 191.26,64.17 191.80,66.45 189.80,65.23 187.80,66.45 188.34,64.17 186.57,62.65 188.90,62.46" fill="none" stroke="#2a2a33" stroke-width="0.85" stroke-linejoin="round"/></svg><span class="t" style="left:195.8px;top:59.60px;height:10px;line-height:10px;font-size:6.38px;color:#1c1c1c;transform:scaleX(0.8228);transform-origin:0 50%;">Suivis</span><svg style="left:217.4px;top:60.2px" width="7" height="7" viewBox="0 0 7 7"><rect x="0.5" y="0.5" width="6" height="6" rx="0.8" fill="none" stroke="#2a2a33" stroke-width="0.9"/><circle cx="3.5" cy="2.7" r="0.9" fill="#2a2a33"/><path d="M1.8 5.2c0-1.4 3.4-1.4 3.4 0z" fill="#2a2a33"/></svg><span class="t" style="left:226.6px;top:59.60px;height:10px;line-height:10px;font-size:6.38px;color:#1c1c1c;transform:scaleX(0.8581);transform-origin:0 50%;">Contacts</span><svg style="left:255.20000000000002px;top:60.4px" width="7.4" height="7" viewBox="0 0 7.4 7"><path d="M0.6 0.9h2.7l3.4 3.3-2.4 2.3-3.7-3.4z" fill="none" stroke="#2a2a33" stroke-width="0.8" stroke-linejoin="round"/></svg><span class="t" style="left:264.8px;top:59.60px;height:10px;line-height:10px;font-size:6.38px;color:#1c1c1c;transform:scaleX(0.8745);transform-origin:0 50%;">Étiquettes</span><svg style="left:297.91px;top:60.13px" width="3.7800000000000002" height="7.14" viewBox="0 0 3.6 6.8"><path d="M0.6 2v3a1.2 1.2 0 0 0 2.4 0v-3.6a0.8 0.8 0 0 0-1.6 0v3.4" fill="none" stroke="#2a2a33" stroke-width="0.9" stroke-linecap="round"/></svg><span class="t" style="left:305.8px;top:59.60px;height:10px;line-height:10px;font-size:5.75px;color:#1c1c1c;">Pièces jointes</span><div class="b" style="left:128.0px;top:72.3px;width:198.0px;height:9.3px;background:#fdfdfe;border-bottom:0.6px solid #bfbfc6"></div><div class="b" style="left:136.4px;top:72.6px;width:0.5px;height:8.6px;background:#cfcfd6;"></div><div class="b" style="left:145.4px;top:72.6px;width:0.5px;height:8.6px;background:#cfcfd6;"></div><div class="b" style="left:154.2px;top:72.6px;width:0.5px;height:8.6px;background:#cfcfd6;"></div><div class="b" style="left:188.6px;top:72.6px;width:0.5px;height:8.6px;background:#cfcfd6;"></div><svg style="left:130.0px;top:74.2px" width="4" height="5" viewBox="0 0 4 5"><path d="M0.6 0.8c1.6 0.3 2 1.3 2.2 3.4" fill="none" stroke="#222" stroke-width="0.8"/></svg><svg style="left:0;top:0" width="1" height="1"><polygon points="140.90,74.70 141.51,76.16 143.09,76.29 141.88,77.32 142.25,78.86 140.90,78.03 139.55,78.86 139.92,77.32 138.71,76.29 140.29,76.16" fill="#222" stroke="#222" stroke-width="0.2" stroke-linejoin="round"/></svg><svg style="left:148.16px;top:74.28px" width="2.8800000000000003" height="5.44" viewBox="0 0 3.6 6.8"><path d="M0.6 2v3a1.2 1.2 0 0 0 2.4 0v-3.6a0.8 0.8 0 0 0-1.6 0v3.4" fill="none" stroke="#222" stroke-width="0.9" stroke-linecap="round"/></svg><span class="t" style="left:157.3px;top:73.00px;height:10px;line-height:10px;font-size:6.38px;color:#1c1c1c;transform:scaleX(0.8428);transform-origin:0 50%;">Étiquettes</span><span class="t" style="left:198.2px;top:73.00px;height:10px;line-height:10px;font-size:6.38px;color:#1c1c1c;transform:scaleX(0.8465);transform-origin:0 50%;">Sujet</span><svg style="left:0;top:0" width="1" height="1"><polygon points="140.90,84.55 141.77,86.65 144.04,86.83 142.31,88.31 142.84,90.52 140.90,89.34 138.96,90.52 139.49,88.31 137.76,86.83 140.03,86.65" fill="none" stroke="#85858d" stroke-width="0.7" stroke-linejoin="round"/></svg><svg style="left:148.0px;top:84.45px" width="3.6" height="6.8" viewBox="0 0 3.6 6.8"><path d="M0.6 2v3a1.2 1.2 0 0 0 2.4 0v-3.6a0.8 0.8 0 0 0-1.6 0v3.4" fill="none" stroke="#2a2a2a" stroke-width="0.9" stroke-linecap="round"/></svg><svg style="left:0;top:0" width="1" height="1"><polygon points="193.00,85.55 193.61,87.01 195.19,87.14 193.98,88.17 194.35,89.71 193.00,88.89 191.65,89.71 192.02,88.17 190.81,87.14 192.39,87.01" fill="#f7c92a" stroke="#f7c92a" stroke-width="0.6" stroke-linejoin="round"/></svg><span class="t" style="left:198.2px;top:83.85px;height:10px;line-height:10px;font-size:6.38px;color:#111;font-weight:bold;transform:scaleX(0.8469);transform-origin:0 50%;white-space:pre;">C-R Conseil municipal du 09/02</span><div class="b" style="left:128.0px;top:93.2px;width:198.0px;height:11.3px;background:#e1e1e5;"></div><svg style="left:0;top:0" width="1" height="1"><polygon points="140.90,95.85 141.77,97.95 144.04,98.13 142.31,99.61 142.84,101.82 140.90,100.64 138.96,101.82 139.49,99.61 137.76,98.13 140.03,97.95" fill="none" stroke="#85858d" stroke-width="0.7" stroke-linejoin="round"/></svg><svg style="left:148.0px;top:95.75px" width="3.6" height="6.8" viewBox="0 0 3.6 6.8"><path d="M0.6 2v3a1.2 1.2 0 0 0 2.4 0v-3.6a0.8 0.8 0 0 0-1.6 0v3.4" fill="none" stroke="#2a2a2a" stroke-width="0.9" stroke-linecap="round"/></svg><span class="t" style="left:198.2px;top:95.15px;height:10px;line-height:10px;font-size:6.38px;color:#1c1c1c;transform:scaleX(0.8361);transform-origin:0 50%;white-space:pre;">visuel rue des Barris</span><svg style="left:0;top:0" width="1" height="1"><polygon points="140.90,107.15 141.77,109.25 144.04,109.43 142.31,110.91 142.84,113.12 140.90,111.94 138.96,113.12 139.49,110.91 137.76,109.43 140.03,109.25" fill="none" stroke="#85858d" stroke-width="0.7" stroke-linejoin="round"/></svg><span class="t" style="left:198.2px;top:106.45px;height:10px;line-height:10px;font-size:6.38px;color:#1c1c1c;transform:scaleX(0.8345);transform-origin:0 50%;white-space:pre;">Re: article site rue des Barris</span><svg style="left:0;top:0" width="1" height="1"><polygon points="140.90,118.45 141.77,120.55 144.04,120.73 142.31,122.21 142.84,124.42 140.90,123.24 138.96,124.42 139.49,122.21 137.76,120.73 140.03,120.55" fill="none" stroke="#85858d" stroke-width="0.7" stroke-linejoin="round"/></svg><span class="t" style="left:198.2px;top:117.75px;height:10px;line-height:10px;font-size:6.38px;color:#1c1c1c;transform:scaleX(0.8592);transform-origin:0 50%;white-space:pre;">Invitation Réunion TKT je gère</span><svg style="left:0;top:0" width="1" height="1"><polygon points="140.90,129.75 141.77,131.85 144.04,132.03 142.31,133.51 142.84,135.72 140.90,134.54 138.96,135.72 139.49,133.51 137.76,132.03 140.03,131.85" fill="none" stroke="#85858d" stroke-width="0.7" stroke-linejoin="round"/></svg><span class="t" style="left:198.2px;top:129.05px;height:10px;line-height:10px;font-size:6.38px;color:#1c1c1c;transform:scaleX(0.8738);transform-origin:0 50%;white-space:pre;">Fwd: Visio-conférence départementale sur l&#x27;adolescence</span><svg style="left:0;top:0" width="1" height="1"><polygon points="140.90,141.05 141.77,143.15 144.04,143.33 142.31,144.81 142.84,147.02 140.90,145.84 138.96,147.02 139.49,144.81 137.76,143.33 140.03,143.15" fill="none" stroke="#85858d" stroke-width="0.7" stroke-linejoin="round"/></svg><span class="t" style="left:198.2px;top:140.35px;height:10px;line-height:10px;font-size:6.38px;color:#1c1c1c;transform:scaleX(0.8687);transform-origin:0 50%;white-space:pre;">Fwd: Modifications dates &quot;Elaborer un support de communication&quot;</span><svg style="left:0;top:0" width="1" height="1"><polygon points="140.90,152.35 141.77,154.45 144.04,154.63 142.31,156.11 142.84,158.32 140.90,157.14 138.96,158.32 139.49,156.11 137.76,154.63 140.03,154.45" fill="none" stroke="#85858d" stroke-width="0.7" stroke-linejoin="round"/></svg><span class="t" style="left:157.0px;top:151.65px;height:10px;line-height:10px;font-size:6.38px;color:#2aa02a;transform:scaleX(0.8552);transform-origin:0 50%;">Fait</span><span class="t" style="left:198.2px;top:151.65px;height:10px;line-height:10px;font-size:6.38px;color:#2aa02a;transform:scaleX(0.9054);transform-origin:0 50%;white-space:pre;">Modifications dates &quot;Elaborer un support de communication&quot;</span><svg style="left:0;top:0" width="1" height="1"><polygon points="140.90,163.65 141.77,165.75 144.04,165.93 142.31,167.41 142.84,169.62 140.90,168.44 138.96,169.62 139.49,167.41 137.76,165.93 140.03,165.75" fill="none" stroke="#85858d" stroke-width="0.7" stroke-linejoin="round"/></svg><span class="t" style="left:198.2px;top:162.95px;height:10px;line-height:10px;font-size:6.38px;color:#1c1c1c;transform:scaleX(0.8507);transform-origin:0 50%;white-space:pre;">Urgent recherche CDD pour mise à jour site internet</span><svg style="left:0;top:0" width="1" height="1"><polygon points="140.90,174.95 141.77,177.05 144.04,177.23 142.31,178.71 142.84,180.92 140.90,179.74 138.96,180.92 139.49,178.71 137.76,177.23 140.03,177.05" fill="none" stroke="#85858d" stroke-width="0.7" stroke-linejoin="round"/></svg><svg style="left:148.0px;top:174.85000000000002px" width="3.6" height="6.8" viewBox="0 0 3.6 6.8"><path d="M0.6 2v3a1.2 1.2 0 0 0 2.4 0v-3.6a0.8 0.8 0 0 0-1.6 0v3.4" fill="none" stroke="#2a2a2a" stroke-width="0.9" stroke-linecap="round"/></svg><span class="t" style="left:198.2px;top:174.25px;height:10px;line-height:10px;font-size:6.38px;color:#1c1c1c;transform:scaleX(0.8501);transform-origin:0 50%;white-space:pre;">Avis de décès Olivier DELBOS -  Sidobre &amp; Vallées - &#x27;Tarn</span><div class="b" style="left:128.0px;top:183.2px;width:198.0px;height:34.4px;background:#f5f5f7;border-top:0.6px solid #c4c4cb;border-bottom:0.6px solid #c9c9d0"></div><span class="t" style="left:136.8px;top:187.40px;height:10px;line-height:10px;font-size:6.38px;color:#8a8a92;transform:scaleX(0.7356);transform-origin:0 50%;">De</span><span class="t" style="left:146.0px;top:187.40px;height:10px;line-height:10px;font-size:6.38px;color:#1c1c1c;transform:scaleX(0.7875);transform-origin:0 50%;">MAIRIE</span><svg style="left:0;top:0" width="1" height="1"><polygon points="167.60,188.30 168.37,190.14 170.36,190.30 168.84,191.60 169.30,193.55 167.60,192.50 165.90,193.55 166.36,191.60 164.84,190.30 166.83,190.14" fill="#1f7be6" stroke="#1f7be6" stroke-width="0.3" stroke-linejoin="round"/></svg><span class="t" style="left:131.2px;top:198.80px;height:10px;line-height:10px;font-size:6.38px;color:#8a8a92;transform:scaleX(0.7983);transform-origin:0 50%;">Sujet</span><span class="t" style="left:146.0px;top:198.80px;height:10px;line-height:10px;font-size:6.38px;color:#111;font-weight:bold;transform:scaleX(0.8321);transform-origin:0 50%;">visuel rue des Barris</span><span class="t" style="left:131.2px;top:209.00px;height:10px;line-height:10px;font-size:6.38px;color:#8a8a92;transform:scaleX(0.8613);transform-origin:0 50%;">Pour</span><span class="t" style="left:146.0px;top:209.00px;height:10px;line-height:10px;font-size:6.38px;color:#1c1c1c;transform:scaleX(0.8043);transform-origin:0 50%;">Sylvain RIVAL</span><svg style="left:0;top:0" width="1" height="1"><polygon points="182.70,210.00 183.47,211.84 185.46,212.00 183.94,213.30 184.40,215.25 182.70,214.21 181.00,215.25 181.46,213.30 179.94,212.00 181.93,211.84" fill="#1f7be6" stroke="#1f7be6" stroke-width="0.3" stroke-linejoin="round"/></svg><span class="t" style="left:131.8px;top:221.50px;height:10px;line-height:10px;font-size:5.48px;color:#161616;font-family:'Liberation Mono',monospace;white-space:pre;-webkit-text-stroke:0.14px #161616;">J&#x27;espère que cela pourra être exploitable car c&#x27;est pas très lourd</span><span class="t" style="left:131.8px;top:235.70px;height:10px;line-height:10px;font-size:5.48px;color:#161616;font-family:'Liberation Mono',monospace;white-space:pre;-webkit-text-stroke:0.14px #161616;">Merci</span><span class="t" style="left:131.8px;top:249.70px;height:10px;line-height:10px;font-size:5.48px;color:#161616;font-family:'Liberation Mono',monospace;white-space:pre;-webkit-text-stroke:0.14px #161616;">Caroline</span><span class="t" style="left:131.8px;top:264.00px;height:10px;line-height:10px;font-size:5.48px;color:#70707a;font-family:'Liberation Mono',monospace;white-space:pre;">--</span><span class="t" style="left:131.8px;top:271.00px;height:10px;line-height:10px;font-size:5.48px;color:#70707a;font-family:'Liberation Mono',monospace;white-space:pre;">Secrétariat - Mairie de Brassac</span><span class="t" style="left:131.8px;top:278.00px;height:10px;line-height:10px;font-size:5.48px;color:#70707a;font-family:'Liberation Mono',monospace;white-space:pre;">Place de l&#x27;Hôtel de Ville - 81260 BRASSAC</span><span class="t" style="left:131.8px;top:285.00px;height:10px;line-height:10px;font-size:5.48px;color:#70707a;font-family:'Liberation Mono',monospace;white-space:pre;">Tél : 05.63.74.00.18 | Fax : 05.63.74.57.44</span><span class="t" style="left:131.8px;top:292.09999999999997px;height:10px;line-height:10px;font-size:5.48px;font-family:'Liberation Mono',monospace;white-space:pre;color:#70707a"><u style="color:#5a7fd6;text-decoration-thickness:0.3px;text-decoration-color:#8aa4e6">mairie@brassac.fr</u> | <u style="color:#5a7fd6;text-decoration-thickness:0.3px;text-decoration-color:#8aa4e6">www.brassac.fr</u></span><div class="b" style="left:128.0px;top:469.3px;width:198.0px;height:15.6px;background:#f0f0f1;border-top:0.7px solid #c4c4c9"></div><svg style="left:131.45px;top:474.6px" width="3.5" height="6.0" viewBox="0 0 3.5 6.0"><path d="M0.5 0.5l2.5 2.5 -2.5 2.5" fill="none" stroke="#151515" stroke-width="1.3"/></svg><svg style="left:141.35px;top:473.35px" width="4.5" height="8.5" viewBox="0 0 3.6 6.8"><path d="M0.6 2v3a1.2 1.2 0 0 0 2.4 0v-3.6a0.8 0.8 0 0 0-1.6 0v3.4" fill="none" stroke="#3a3a3a" stroke-width="0.9" stroke-linecap="round"/></svg><span class="t" style="left:148.8px;top:473.40px;height:10px;line-height:10px;font-size:6.38px;color:#1c1c1c;transform:scaleX(0.866);transform-origin:0 50%;">1 pièce jointe : 20210223-ATP-Brassac -Communication doc A2.pdf</span><span class="t" style="left:317.4px;top:473.40px;height:10px;line-height:10px;font-size:5.75px;color:#9a9aa0;">2,7 Mo</span><div class="b" style="left:0px;top:484.6px;width:326px;height:11.1px;background:#e4e4ea;border-top:0.6px solid #c4c4cb"></div><svg style="left:3.0px;top:487.2px" width="9" height="6.1" viewBox="0 0 8 5.4"><g fill="none" stroke="#2a2a33" stroke-width="0.85"><circle cx="4" cy="2.7" r="0.7" fill="#2a2a33"/><path d="M2.6 1.2a2.2 2.2 0 0 0 0 3M5.4 1.2a2.2 2.2 0 0 1 0 3M1.3 0.4a3.4 3.4 0 0 0 0 4.6M6.7 0.4a3.4 3.4 0 0 1 0 4.6"/></g></svg><div class="b" style="left:13.8px;top:485.2px;width:0.5px;height:10.2px;background:#c9c9d0;"></div><div class="b" style="left:-0.2px;top:495.6px;width:326.2px;height:14.4px;background:#f1f1f2;"></div><svg style="left:-439.2px;top:495.6px" width="765" height="14.4" viewBox="0 495.6 765 14.4" font-family="'Liberation Sans',sans-serif"><g fill="#111"><rect x="444.2" y="499.4" width="3.3" height="3.3"/><rect x="448" y="499.1" width="3.6" height="3.6"/><rect x="444.2" y="503.2" width="3.3" height="3.3"/><rect x="448" y="503.2" width="3.6" height="3.6"/></g><circle cx="466.6" cy="502" r="2.3" fill="none" stroke="#222" stroke-width="0.8"/><path d="M464.9 503.8l-2.6 2.8" stroke="#222" stroke-width="0.9"/><circle cx="481.5" cy="503" r="3" fill="none" stroke="#222" stroke-width="1.15"/><g fill="none" stroke="#333" stroke-width="0.7"><rect x="496" y="501" width="4.2" height="4"/><path d="M495 499.6h2M495 506.4h2M499.4 499.6h2M499.4 506.4h2M495.2 499.6v1.2M495.2 506.4v-1.2M501.6 499.6v6.8"/></g><path d="M513 499.8h2.8l0.8 0.9h4v5.8h-7.6z" fill="#f7c23c"/><rect x="513" y="501.6" width="7.6" height="4.9" fill="#fad764"/><rect x="514.6" y="503.6" width="4.4" height="2.9" fill="#3f92dc"/><rect x="515.8" y="504.8" width="2" height="1.7" fill="#fad764"/><circle cx="534.4" cy="503" r="3.7" fill="#f0642a"/><path d="M531 501.4a3.7 3.7 0 0 1 6.8 0.2c0.6 2.4-1 4.8-3.4 5.1 1.6-1 2.2-2.6 1.6-4.2z" fill="#f9b22c"/><circle cx="534" cy="503.2" r="1.9" fill="#7a3ad0"/><path d="M531 504.4c1 1.8 3.6 2.2 5.2 1-1.8 0.4-3.4-0.4-4-1.8z" fill="#e22a6a"/><circle cx="552" cy="503" r="3.6" fill="#e2463a"/><path d="M552 503l-3.2 1.8a3.6 3.6 0 0 0 3 1.8l1.8-3z" fill="#34a058"/><path d="M552 503l1.7 3a3.6 3.6 0 0 0 1.7-4.8h-3.4z" fill="#f7c430"/><circle cx="552" cy="503" r="1.6" fill="#fff"/><circle cx="552" cy="503" r="1.2" fill="#3f82e8"/><path d="M566.4 500l1-0.9h4l1 0.9 0.5 1.6-1 3.8-2.5 2-2.5-2-1-3.8z" fill="#f2502a"/><path d="M567.8 501.4h3.2l-0.5 2.2-1.1 1.6-1.1-1.6z" fill="#fff" opacity="0.9"/><path d="M569.4 501.8v2.4" stroke="#f2502a" stroke-width="0.6"/><rect x="562.9" y="508.9" width="12.8" height="1.1" fill="#2e9e5e"/><circle cx="586.7" cy="503" r="3.8" fill="#2a73d8"/><path d="M583.4 501.4a3.8 3.8 0 0 1 6.6-0.2c-2.2-1-4.4-0.8-6.6 0.2z" fill="#1a4fa8"/><path d="M584.4 503h4.6v2.4h-3l-1 1v-1h-0.6z" fill="#f4f8ff"/><rect x="579.9" y="508.9" width="13.3" height="1.1" fill="#2e9e5e"/><rect x="600.8" y="499.6" width="7" height="6.4" rx="1.2" fill="#7d8be0"/><path d="M602 501.6h4.6v2.6h-4.6z" fill="#e9ecfb"/><path d="M606.6 505l1 1.4v-1.4z" fill="#7d8be0"/><rect x="617.6" y="499.4" width="7.4" height="7" fill="#f08a1c"/><rect x="617.6" y="499.4" width="7.4" height="3" fill="#f7a640"/><text x="618.9" y="504.4" font-size="3.8" font-weight="bold" fill="#fff4e0">Ai</text><rect x="635" y="499.4" width="7.4" height="7" fill="#5b2a86"/><rect x="635" y="499.4" width="7.4" height="3" fill="#7a46a6"/><text x="636.2" y="504.4" font-size="3.8" font-weight="bold" fill="#ead8ff">Pr</text><rect x="648" y="495.6" width="16.7" height="14.4" fill="#fbfbfb"/><rect x="648" y="508.9" width="16.7" height="1.1" fill="#2e9e5e"/><rect x="653.2" y="499.2" width="6.6" height="7.4" fill="#f3f3f3" stroke="#cfcfcf" stroke-width="0.3"/><path d="M654 504.8c1.4-1.2 2-3 2.2-4.6 0.3 1.8 1.2 3.4 3 4.2-1.8-0.2-3.6 0-5.2 0.4z" fill="none" stroke="#d2202a" stroke-width="0.6"/><rect x="653.2" y="505.2" width="6.6" height="1.4" fill="#c8c8c8"/><rect x="671.6" y="499.6" width="6" height="7" rx="0.6" fill="#a13ad0"/><rect x="670.2" y="500.8" width="4.4" height="4.6" rx="0.5" fill="#7a1fa6"/><text x="671" y="504.5" font-size="3.6" font-weight="bold" fill="#fff">N</text><rect x="689" y="499.6" width="6" height="7" rx="0.6" fill="#3a8fe6"/><rect x="689" y="503.2" width="6" height="3.4" fill="#1f5fb8"/><rect x="687.6" y="500.8" width="4.4" height="4.6" rx="0.5" fill="#1d5ab4"/><text x="688" y="504.5" font-size="3.4" font-weight="bold" fill="#fff">W</text><rect x="706.6" y="499.6" width="6" height="7" rx="0.6" fill="#2aa566"/><rect x="706.6" y="503.2" width="6" height="3.4" fill="#15703f"/><rect x="705.2" y="500.8" width="4.4" height="4.6" rx="0.5" fill="#13683a"/><text x="706.2" y="504.5" font-size="3.6" font-weight="bold" fill="#fff">X</text><rect x="722.6" y="499.4" width="7.2" height="7.2" fill="#d6f0ee" stroke="#1f9e94" stroke-width="0.6"/><text x="724.4" y="505" font-size="5.4" font-weight="bold" fill="#138a80">P</text><path d="M740.4 499.4h4.4l1.8 1.8v5.6h-6.2z" fill="#3f97e4"/><path d="M744.8 499.4v1.8h1.8z" fill="#bfe0ff"/><rect x="741.6" y="502" width="3.4" height="3.4" fill="#d8ecff" opacity="0.9"/><rect x="757.4" y="499.6" width="8" height="7" rx="0.6" fill="#58c046"/><rect x="759" y="501.4" width="6" height="3.6" fill="#c6efc0"/><path d="M757.4 501.2h8" stroke="#3a9a30" stroke-width="0.5"/></svg></div></body></html>
